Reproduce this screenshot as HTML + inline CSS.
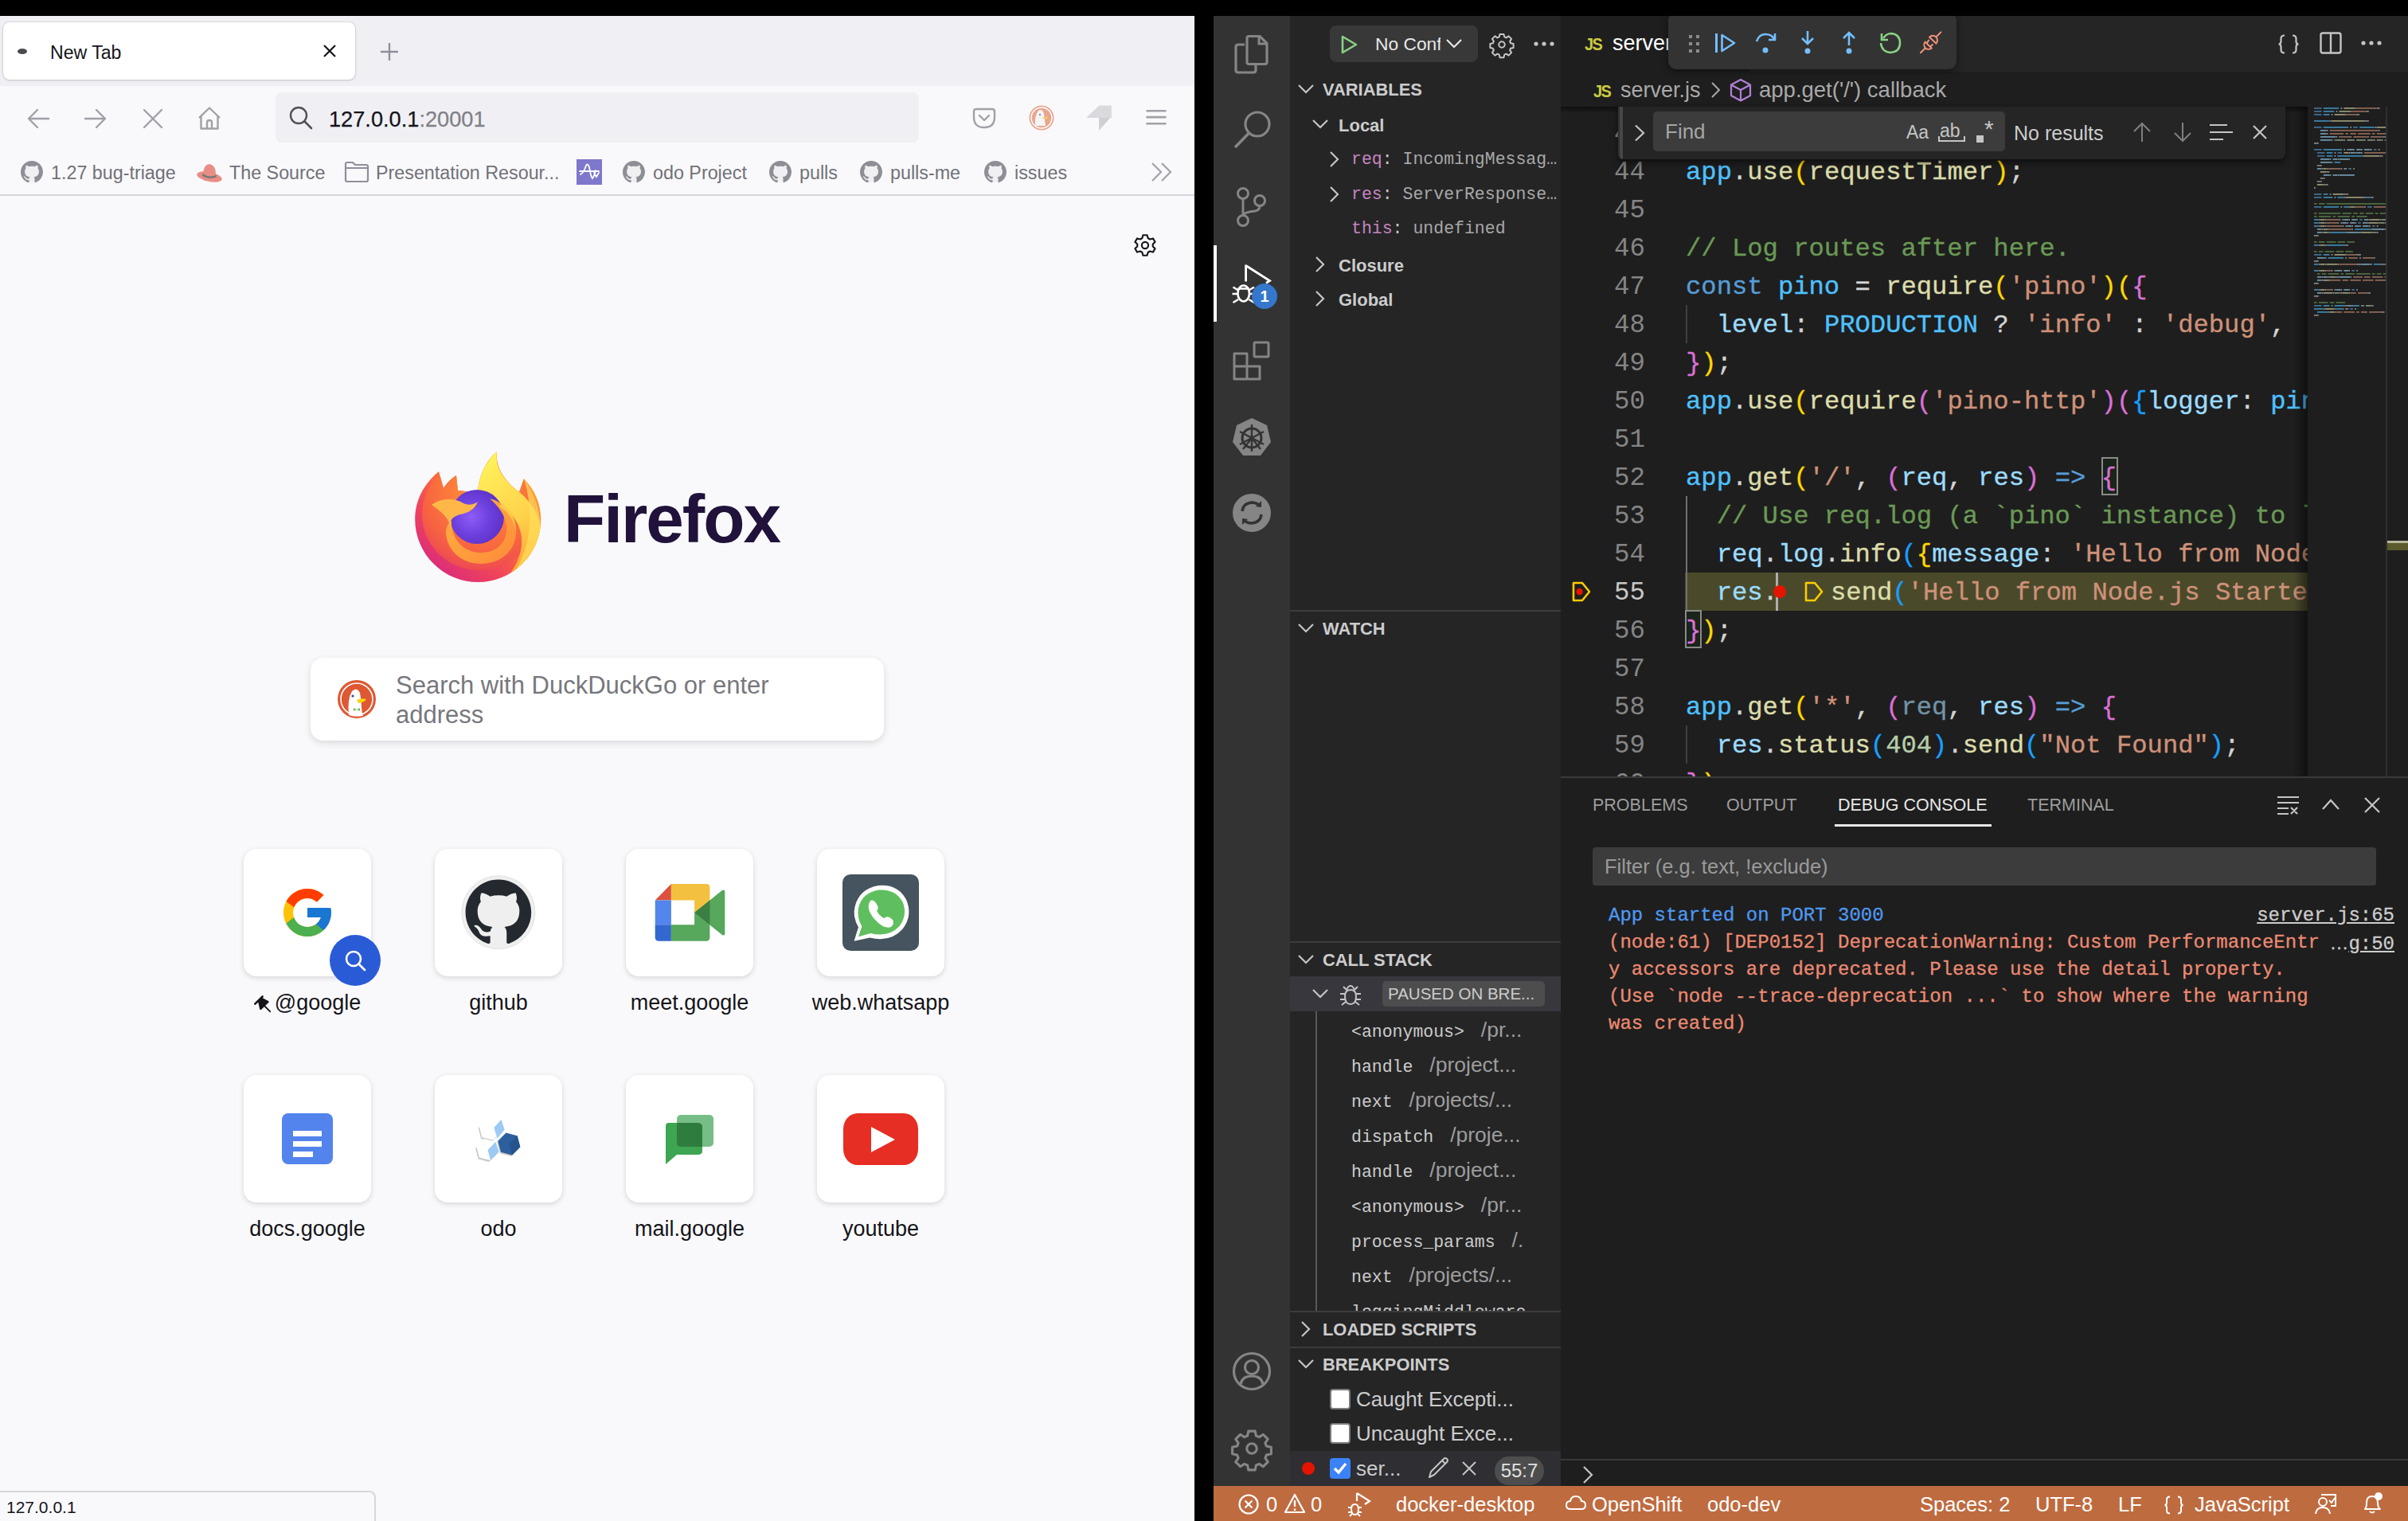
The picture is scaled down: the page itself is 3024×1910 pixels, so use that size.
<!DOCTYPE html>
<html><head><meta charset="utf-8">
<style>
*{box-sizing:border-box;margin:0;padding:0}
html,body{width:3024px;height:1910px;overflow:hidden;background:#000;font-family:"Liberation Sans",sans-serif}
.a{position:absolute}
.mono{font-family:"Liberation Mono",monospace}
svg{position:absolute;overflow:visible}
/* firefox */
#ff{left:0;top:20px;width:1500px;height:1890px;background:#f9f9fb;overflow:hidden}
#fftabs{left:0;top:0;width:1500px;height:88px;background:#f0f0f4}
.ffbm{font-size:23.3px;color:#717179;white-space:nowrap;line-height:30px}
.tile{width:160px;height:160px;background:#fff;border-radius:16px;box-shadow:0 2px 6px rgba(58,57,68,.18)}
.tlabel{width:240px;text-align:center;font-size:27px;color:#15141a;line-height:34px}
/* vscode */
#vs{left:1524px;top:20px;width:1500px;height:1890px;background:#1e1e1e;overflow:hidden}
.sb{color:#cccccc;white-space:nowrap}
.hdr{font-weight:bold;font-size:21.9px;color:#cccccc;line-height:30px}
.code{font-family:"Liberation Mono",monospace;font-size:32.2px;line-height:48px;white-space:pre;color:#d4d4d4;-webkit-text-stroke:0.35px currentColor}
.ln{font-family:"Liberation Mono",monospace;font-size:32.4px;line-height:48px;color:#858585;text-align:right;width:120px}
</style></head><body>
<div class="a" id="ff">
  <div class="a" id="fftabs">
    <div class="a" style="left:4px;top:8px;width:442px;height:72px;background:#fff;border-radius:8px;box-shadow:0 0 2px rgba(0,0,0,.25),0 1px 3px rgba(0,0,0,.12)"></div>
    <div class="a" style="left:22px;top:41px;width:12px;height:7px;border-radius:50%;background:#4a4a4f"></div>
    <div class="a" style="left:63px;top:31px;font-size:23.1px;line-height:30px;color:#15141a">New Tab</div>
    <svg style="left:406px;top:36px" width="16" height="16"><path d="M1 1L15 15M15 1L1 15" stroke="#15141a" stroke-width="2.2"/></svg>
    <svg style="left:477px;top:33px" width="24" height="24"><path d="M12 1V23M1 12H23" stroke="#8f8f9d" stroke-width="2.4"/></svg>
  </div>
  <!-- nav -->
  <svg style="left:34px;top:115px" width="28" height="28"><path d="M27 14H2M13 3L2 14L13 25" stroke="#a0a0a8" stroke-width="2.4" fill="none" stroke-linecap="round" stroke-linejoin="round"/></svg>
  <svg style="left:106px;top:115px" width="28" height="28"><path d="M1 14H26M15 3L26 14L15 25" stroke="#a0a0a8" stroke-width="2.4" fill="none" stroke-linecap="round" stroke-linejoin="round"/></svg>
  <svg style="left:180px;top:117px" width="24" height="24"><path d="M1 1L23 23M23 1L1 23" stroke="#a0a0a8" stroke-width="2.4" stroke-linecap="round"/></svg>
  <svg style="left:248px;top:114px" width="30" height="30"><path d="M2 14L15 1.5L28 14M4.5 12V27.5H25.5V12M12 27.5V20Q12 17 15 17Q18 17 18 20V27.5" stroke="#a0a0a8" stroke-width="2.4" fill="none" stroke-linejoin="round"/></svg>
  <div class="a" style="left:346px;top:96px;width:808px;height:63px;background:#f0f0f4;border-radius:8px"></div>
  <svg style="left:363px;top:113px" width="30" height="30"><circle cx="12" cy="12" r="10" stroke="#505058" stroke-width="2.4" fill="none"/><path d="M19.5 19.5L28 28" stroke="#505058" stroke-width="2.6" stroke-linecap="round"/></svg>
  <div class="a" style="left:413px;top:113px;font-size:27.2px;line-height:34px;color:#15141a;white-space:nowrap;-webkit-text-stroke:0.25px currentColor">127.0.0.1<span style="color:#808087">:20001</span></div>
  <svg style="left:1222px;top:115px" width="28" height="28"><path d="M4 2H24Q27 2 27 5V12Q27 25 14 25Q1 25 1 12V5Q1 2 4 2Z" stroke="#a0a0a8" stroke-width="2.4" fill="none"/><path d="M8 10L14 16L20 10" stroke="#a0a0a8" stroke-width="2.4" fill="none" stroke-linecap="round" stroke-linejoin="round"/></svg>
  <svg style="left:1291px;top:111px" width="34" height="34"><circle cx="17" cy="17" r="15.5" fill="#eaa58d"/><circle cx="17" cy="17" r="13" fill="none" stroke="#fff" stroke-width="1.5"/><path d="M9 27Q8 14 13 8Q18 5 20 12Q21 20 22 27Z" fill="#f4f4f4"/><path d="M17 17L25 15L24 19Z" fill="#f2c66a"/><circle cx="15" cy="13" r="1.2" fill="#7d8cc7"/></svg>
  <svg style="left:1364px;top:111px" width="32" height="34"><path d="M0 17L16.3 1.4H31.8V15.1L16.3 32.5V17Z" fill="#dadade"/><path d="M16.3 17H31.8V15.1L16.3 32.5Z" fill="#cfcfd4"/></svg>
  <svg style="left:1439px;top:116px" width="26" height="24"><path d="M1.5 3.2H24.5M1.5 11.1H24.5M1.5 19.2H24.5" stroke="#a0a0a8" stroke-width="2.6" stroke-linecap="round"/></svg>
  <!-- bookmarks -->
  <svg style="left:26px;top:182px" width="28" height="28"><circle cx="14" cy="14" r="13" fill="#f0f0f2"/><path transform="scale(1.75)" fill="#8e8e96" d="M8 0C3.58 0 0 3.58 0 8c0 3.54 2.29 6.53 5.47 7.59.4.07.55-.17.55-.38 0-.19-.01-.82-.01-1.49-2.01.37-2.53-.49-2.69-.94-.09-.23-.48-.94-.82-1.13-.28-.15-.68-.52-.01-.53.63-.01 1.08.58 1.23.82.72 1.21 1.87.87 2.33.66.07-.52.28-.87.51-1.07-1.78-.2-3.64-.89-3.64-3.95 0-.87.31-1.59.82-2.15-.08-.2-.36-1.02.08-2.12 0 0 .67-.21 2.2.82.64-.18 1.32-.27 2-.27.68 0 1.36.09 2 .27 1.53-1.04 2.2-.82 2.2-.82.44 1.1.16 1.92.08 2.12.51.56.82 1.27.82 2.15 0 3.07-1.87 3.75-3.65 3.95.29.25.54.73.54 1.48 0 1.07-.01 1.93-.01 2.2 0 .21.15.46.55.38A8.013 8.013 0 0016 8c0-4.42-3.58-8-8-8z"/></svg>
  <div class="a ffbm" style="left:64px;top:182px">1.27 bug-triage</div>
  <svg style="left:246px;top:182px" width="34" height="28"><ellipse cx="17" cy="20" rx="16" ry="6" fill="#e88e86" transform="rotate(12 17 20)"/><path d="M9 18Q9 5 17 4Q25 5 25 17Q17 21 9 18Z" fill="#e88e86"/><path d="M8.5 16Q17 22 26 17.5L25.5 20.5Q17 24 8 19Z" fill="#777"/></svg>
  <div class="a ffbm" style="left:288px;top:182px">The Source</div>
  <svg style="left:432px;top:182px" width="32" height="28"><path d="M2 4Q2 2 4 2H11L14 5H28Q30 5 30 7V24Q30 26 28 26H4Q2 26 2 24Z" stroke="#8f8f9d" stroke-width="2.2" fill="none" stroke-linejoin="round"/><path d="M2 9H30" stroke="#8f8f9d" stroke-width="2"/></svg>
  <div class="a ffbm" style="left:472px;top:182px">Presentation Resour...</div>
  <div class="a" style="left:724px;top:180px;width:32px;height:32px;background:#7d78cc"></div>
  <svg style="left:724px;top:180px" width="32" height="32"><path d="M5 19Q9 17 12 8Q14 4 16 10Q18 22 20 24Q22 22 24 14M4 15H28M22 17L25 22L28 17" stroke="#fff" stroke-width="1.8" fill="none" stroke-linecap="round"/></svg>
  <svg style="left:782px;top:182px" width="28" height="28"><circle cx="14" cy="14" r="13" fill="#f0f0f2"/><path transform="scale(1.75)" fill="#8e8e96" d="M8 0C3.58 0 0 3.58 0 8c0 3.54 2.29 6.53 5.47 7.59.4.07.55-.17.55-.38 0-.19-.01-.82-.01-1.49-2.01.37-2.53-.49-2.69-.94-.09-.23-.48-.94-.82-1.13-.28-.15-.68-.52-.01-.53.63-.01 1.08.58 1.23.82.72 1.21 1.87.87 2.33.66.07-.52.28-.87.51-1.07-1.78-.2-3.64-.89-3.64-3.95 0-.87.31-1.59.82-2.15-.08-.2-.36-1.02.08-2.12 0 0 .67-.21 2.2.82.64-.18 1.32-.27 2-.27.68 0 1.36.09 2 .27 1.53-1.04 2.2-.82 2.2-.82.44 1.1.16 1.92.08 2.12.51.56.82 1.27.82 2.15 0 3.07-1.87 3.75-3.65 3.95.29.25.54.73.54 1.48 0 1.07-.01 1.93-.01 2.2 0 .21.15.46.55.38A8.013 8.013 0 0016 8c0-4.42-3.58-8-8-8z"/></svg>
  <div class="a ffbm" style="left:820px;top:182px">odo Project</div>
  <svg style="left:966px;top:182px" width="28" height="28"><circle cx="14" cy="14" r="13" fill="#f0f0f2"/><path transform="scale(1.75)" fill="#8e8e96" d="M8 0C3.58 0 0 3.58 0 8c0 3.54 2.29 6.53 5.47 7.59.4.07.55-.17.55-.38 0-.19-.01-.82-.01-1.49-2.01.37-2.53-.49-2.69-.94-.09-.23-.48-.94-.82-1.13-.28-.15-.68-.52-.01-.53.63-.01 1.08.58 1.23.82.72 1.21 1.87.87 2.33.66.07-.52.28-.87.51-1.07-1.78-.2-3.64-.89-3.64-3.95 0-.87.31-1.59.82-2.15-.08-.2-.36-1.02.08-2.12 0 0 .67-.21 2.2.82.64-.18 1.32-.27 2-.27.68 0 1.36.09 2 .27 1.53-1.04 2.2-.82 2.2-.82.44 1.1.16 1.92.08 2.12.51.56.82 1.27.82 2.15 0 3.07-1.87 3.75-3.65 3.95.29.25.54.73.54 1.48 0 1.07-.01 1.93-.01 2.2 0 .21.15.46.55.38A8.013 8.013 0 0016 8c0-4.42-3.58-8-8-8z"/></svg>
  <div class="a ffbm" style="left:1004px;top:182px">pulls</div>
  <svg style="left:1080px;top:182px" width="28" height="28"><circle cx="14" cy="14" r="13" fill="#f0f0f2"/><path transform="scale(1.75)" fill="#8e8e96" d="M8 0C3.58 0 0 3.58 0 8c0 3.54 2.29 6.53 5.47 7.59.4.07.55-.17.55-.38 0-.19-.01-.82-.01-1.49-2.01.37-2.53-.49-2.69-.94-.09-.23-.48-.94-.82-1.13-.28-.15-.68-.52-.01-.53.63-.01 1.08.58 1.23.82.72 1.21 1.87.87 2.33.66.07-.52.28-.87.51-1.07-1.78-.2-3.64-.89-3.64-3.95 0-.87.31-1.59.82-2.15-.08-.2-.36-1.02.08-2.12 0 0 .67-.21 2.2.82.64-.18 1.32-.27 2-.27.68 0 1.36.09 2 .27 1.53-1.04 2.2-.82 2.2-.82.44 1.1.16 1.92.08 2.12.51.56.82 1.27.82 2.15 0 3.07-1.87 3.75-3.65 3.95.29.25.54.73.54 1.48 0 1.07-.01 1.93-.01 2.2 0 .21.15.46.55.38A8.013 8.013 0 0016 8c0-4.42-3.58-8-8-8z"/></svg>
  <div class="a ffbm" style="left:1118px;top:182px">pulls-me</div>
  <svg style="left:1236px;top:182px" width="28" height="28"><circle cx="14" cy="14" r="13" fill="#f0f0f2"/><path transform="scale(1.75)" fill="#8e8e96" d="M8 0C3.58 0 0 3.58 0 8c0 3.54 2.29 6.53 5.47 7.59.4.07.55-.17.55-.38 0-.19-.01-.82-.01-1.49-2.01.37-2.53-.49-2.69-.94-.09-.23-.48-.94-.82-1.13-.28-.15-.68-.52-.01-.53.63-.01 1.08.58 1.23.82.72 1.21 1.87.87 2.33.66.07-.52.28-.87.51-1.07-1.78-.2-3.64-.89-3.64-3.95 0-.87.31-1.59.82-2.15-.08-.2-.36-1.02.08-2.12 0 0 .67-.21 2.2.82.64-.18 1.32-.27 2-.27.68 0 1.36.09 2 .27 1.53-1.04 2.2-.82 2.2-.82.44 1.1.16 1.92.08 2.12.51.56.82 1.27.82 2.15 0 3.07-1.87 3.75-3.65 3.95.29.25.54.73.54 1.48 0 1.07-.01 1.93-.01 2.2 0 .21.15.46.55.38A8.013 8.013 0 0016 8c0-4.42-3.58-8-8-8z"/></svg>
  <div class="a ffbm" style="left:1274px;top:182px">issues</div>
  <svg style="left:1446px;top:184px" width="26" height="24"><path d="M1 1L12 12L1 23M13 1L24 12L13 23" stroke="#a0a0a8" stroke-width="2.2" fill="none"/></svg>
  <div class="a" style="left:0;top:224px;width:1500px;height:2px;background:#d4d4da"></div>
  <!-- content -->
  <svg style="left:1423px;top:273px" width="30" height="30" viewBox="0 0 16 16"><path d="M6.6 1.2h2.8l.5 2 1.4.8 2-.6 1.4 2.4-1.5 1.4v1.6l1.5 1.4-1.4 2.4-2-.6-1.4.8-.5 2H6.6l-.5-2-1.4-.8-2 .6-1.4-2.4 1.5-1.4V7.2L1.3 5.8l1.4-2.4 2 .6 1.4-.8z" fill="none" stroke="#15141a" stroke-width="1.1" stroke-linejoin="round"/><circle cx="8" cy="8" r="2.2" fill="none" stroke="#15141a" stroke-width="1.1"/></svg>
  <!-- logo -->
  <svg style="left:520px;top:546px" width="164" height="168" viewBox="0 0 164 168">
    <defs>
      <linearGradient id="orb" x1="0.15" y1="0.95" x2="0.85" y2="0.1">
        <stop offset="0" stop-color="#d8287f"/><stop offset="0.3" stop-color="#f0445a"/><stop offset="0.6" stop-color="#ff7139"/><stop offset="1" stop-color="#ffa930"/>
      </linearGradient>
      <radialGradient id="inner" cx="0.5" cy="0.35" r="0.65">
        <stop offset="0" stop-color="#ff9a36"/><stop offset="0.7" stop-color="#f96a3c"/><stop offset="1" stop-color="#ef4d4f"/>
      </radialGradient>
      <radialGradient id="globe" cx="0.4" cy="0.5" r="0.7">
        <stop offset="0" stop-color="#8f5cf7"/><stop offset="0.5" stop-color="#6b3fdc"/><stop offset="1" stop-color="#5a2dbd"/>
      </radialGradient>
      <linearGradient id="flame" x1="0.3" y1="0" x2="0.6" y2="1">
        <stop offset="0" stop-color="#fff35a"/><stop offset="0.6" stop-color="#ffd04a"/><stop offset="1" stop-color="#ff9e30"/>
      </linearGradient>
      <linearGradient id="fox" x1="0" y1="0" x2="1" y2="1">
        <stop offset="0" stop-color="#ffb342"/><stop offset="1" stop-color="#ff8a3a"/>
      </linearGradient>
    </defs>
    <clipPath id="orbclip"><path id="orbp" d="M1.2 86C1.4 62 12 42 31 26L37 47C42 39 47 35 53 31L55 50C63 50 72 52 80 57C80 32 91 12 104 1C102 22 114 38 132 52L138 35C152 50 159 66 159.2 86A79 79 0 0 1 1.2 86Z"/></clipPath>
    <path d="M1.2 86C1.4 62 12 42 31 26L37 47C42 39 47 35 53 31L55 50C63 50 72 52 80 57C80 32 91 12 104 1C102 22 114 38 132 52L138 35C152 50 159 66 159.2 86A79 79 0 0 1 1.2 86Z" fill="url(#orb)"/>
    <g clip-path="url(#orbclip)">
    <ellipse cx="82" cy="80" rx="72" ry="70" fill="url(#inner)" opacity="0.85"/>
    <path d="M80 58C78 32 92 12 104 1C101 22 114 38 130 50C152 68 160 88 159 104C157 132 140 152 114 162C138 136 140 108 128 88C118 70 100 60 80 58Z" fill="url(#flame)"/>
    <path d="M138 35C156 60 161 90 158 110C154 134 140 150 120 160C146 130 152 80 138 35Z" fill="#ffe05a" opacity="0.7"/>
    </g>
    <circle cx="79" cy="83" r="34" fill="url(#globe)"/>
    <path d="M95 60C112 64 128 80 128 102C128 126 108 142 84 142C60 142 42 126 40 104C40 96 43 90 47 88C46 110 62 128 84 128C106 128 118 112 116 94C114 80 106 70 95 60Z" fill="url(#fox)"/>
    <path d="M22 68C32 60 50 58 62 66C70 70 78 66 80 64C76 74 68 78 58 80C50 82 46 86 45 92C42 84 34 76 22 68Z" fill="#ffb848"/>
    <path d="M112 66C122 74 128 88 128 102C126 88 118 76 106 70Z" fill="#ffd24f" opacity="0.8"/>
  </svg>
  <div class="a" style="left:708px;top:582px;font-size:85.5px;font-weight:bold;line-height:100px;color:#20123a;letter-spacing:-2px">Firefox</div>
  <!-- search -->
  <div class="a" style="left:390px;top:806px;width:720px;height:104px;background:#fff;border-radius:16px;box-shadow:0 3px 8px rgba(58,57,68,.16)"></div>
  <svg style="left:424px;top:834px" width="48" height="48"><circle cx="24" cy="24" r="24" fill="#de5833"/><circle cx="24" cy="24" r="20" fill="none" stroke="#fff" stroke-width="1.6"/><path d="M14 44Q12 24 18 14Q24 8 28 16Q30 26 30 34Q30 40 32 45Q22 47 14 44Z" fill="#fff"/><circle cx="19" cy="20" r="1.6" fill="#2d4f8e"/><path d="M24 25Q30 22 36 24Q34 28 26 29Z" fill="#fdd20a"/><path d="M20 39L24 37L28 39L28 35L24 37L20 35Z" fill="#67bd4f"/></svg>
  <div class="a" style="left:497px;top:822px;width:560px;font-size:31px;line-height:37px;color:#77777d">Search with DuckDuckGo or enter address</div>
  <!-- tiles row 1 -->
  <div class="a tile" style="left:306px;top:1046px"></div>
  <div class="a tile" style="left:546px;top:1046px"></div>
  <div class="a tile" style="left:786px;top:1046px"></div>
  <div class="a tile" style="left:1026px;top:1046px"></div>
  <svg style="left:350px;top:1090px" width="72" height="72" viewBox="0 0 48 48"><path d="M43.6 20.1H42V20H24v8h11.3C33.7 32.7 29.2 36 24 36c-6.6 0-12-5.4-12-12s5.4-12 12-12c3.1 0 5.8 1.2 7.9 3.1l5.7-5.7C34 6.1 29.3 4 24 4 13 4 4 13 4 24s9 20 20 20 20-9 20-20c0-1.3-.1-2.6-.4-3.9z" fill="#FFC107"/><path d="M6.3 14.7l6.6 4.8C14.7 15.1 19 12 24 12c3.1 0 5.8 1.2 7.9 3.1l5.7-5.7C34 6.1 29.3 4 24 4 16.3 4 9.7 8.3 6.3 14.7z" fill="#FF3D00"/><path d="M24 44c5.2 0 9.9-2 13.4-5.2l-6.2-5.2C29.2 35.1 26.7 36 24 36c-5.2 0-9.6-3.3-11.3-8l-6.5 5C9.5 39.6 16.2 44 24 44z" fill="#4CAF50"/><path d="M43.6 20.1H42V20H24v8h11.3c-.8 2.2-2.2 4.2-4.1 5.6l6.2 5.2C37 39.2 44 34 44 24c0-1.3-.1-2.6-.4-3.9z" fill="#1976D2"/></svg>
  <div class="a" style="left:414px;top:1154px;width:64px;height:64px;border-radius:50%;background:#2a5bd7"></div>
  <svg style="left:432px;top:1172px" width="30" height="30"><circle cx="12" cy="12" r="9" fill="none" stroke="#fff" stroke-width="2.6"/><path d="M18.5 18.5L26 26" stroke="#fff" stroke-width="2.8" stroke-linecap="round"/></svg>
  <svg style="left:579px;top:1080px" width="94" height="94" viewBox="0 0 94 94"><circle cx="46.9" cy="45.7" r="46" fill="#efefef" stroke="#e2e2e2" stroke-width="1"/><g transform="translate(5.6 4.4) scale(5.1625)"><path fill="#24292f" d="M8 0C3.58 0 0 3.58 0 8c0 3.54 2.29 6.53 5.47 7.59.4.07.55-.17.55-.38 0-.19-.01-.82-.01-1.49-2.01.37-2.53-.49-2.69-.94-.09-.23-.48-.94-.82-1.130-.28-.15-.68-.52-.01-.53.63-.01 1.08.58 1.23.82.72 1.21 1.87.87 2.33.66.07-.52.28-.87.51-1.07-1.780-.2-3.640-.89-3.640-3.950 0-.87.31-1.59.82-2.15-.08-.2-.36-1.02.08-2.12 0 0 .67-.21 2.2.82.64-.18 1.32-.27 2-.27.68 0 1.36.09 2 .27 1.53-1.04 2.2-.82 2.2-.82.44 1.1.16 1.92.08 2.12.51.56.82 1.27.82 2.15 0 3.07-1.87 3.75-3.65 3.95.29.25.54.73.54 1.48 0 1.07-.01 1.93-.01 2.2 0 .21.15.46.55.38A8.013 8.013 0 0016 8c0-4.42-3.58-8-8-8z"/></g></svg>
  <svg style="left:822px;top:1090px" width="92" height="74" viewBox="0 0 92 74"><path d="M0.7 20.5L20.9 0V20.5Z" fill="#dc5141"/><path d="M20.9 0H65Q69.4 0 69.4 4.5V20.5L50.1 36V20.5H20.9Z" fill="#f4c03f"/><path d="M0.7 20.5H20.9V51.3H0.7Z" fill="#5386ec"/><path d="M0.7 51.3H20.9V71.8H5.5Q0.7 71.8 0.7 67Z" fill="#3467d0"/><path d="M20.9 51.3H50.1V36L69.4 52V67Q69.4 71.8 64.6 71.8H20.9Z" fill="#57a75c"/><path d="M50.1 36L84.6 8.3Q88.3 6 88.3 10V62Q88.3 66 84.6 63.7L50.1 36Z" fill="#57a75c"/><path d="M50.1 36L69.4 20.5V52Z" fill="#3b7f43"/></svg>
  <div class="a" style="left:1058px;top:1078px;width:96px;height:96px;border-radius:10px;background:#45545e"></div>
  <svg style="left:1066px;top:1086px" width="80" height="80" viewBox="0 0 80 80"><g transform="translate(40.9 39.5) scale(1.09) translate(-39.5 -38.7)"><path d="M8 72L13 56Q6 44 9 32Q14 12 36 8Q58 6 68 24Q76 42 64 58Q50 74 26 68Z" fill="#fff"/><path d="M13 67L17 55Q11 45 13 34Q17 16 37 13Q56 12 64 27Q70 42 60 55Q48 68 27 63Z" fill="#5fbf5e"/><path d="M28 26Q24 30 27 38Q32 48 42 54Q50 57 52 52Q53 48 49 46Q45 44 43 47Q36 44 33 37Q36 34 33 30Q31 26 28 26Z" fill="#fff" stroke="#fff" stroke-width="2.2" stroke-linejoin="round"/></g></svg>
  <div class="a tlabel" style="left:266px;top:1222px;color:#15141a"><span style="display:inline-block;width:26px"></span>@google</div>
  <svg style="left:317px;top:1228px" width="26" height="26"><path d="M3.3 12.6L12.6 3.5" stroke="#15141a" stroke-width="2.6" stroke-linecap="round"/><path d="M7 9.5L12 4.8L20.4 9.2Q21.2 10 20.4 10.8L11.2 19.8Q9.8 20.6 9.2 19.2Z" fill="#15141a"/><path d="M15.5 15.5L22.3 22.3" stroke="#15141a" stroke-width="1.8" stroke-linecap="round"/></svg>
  <div class="a tlabel" style="left:506px;top:1222px">github</div>
  <div class="a tlabel" style="left:746px;top:1222px">meet.google</div>
  <div class="a tlabel" style="left:986px;top:1222px">web.whatsapp</div>
  <!-- tiles row 2 -->
  <div class="a tile" style="left:306px;top:1330px"></div>
  <div class="a tile" style="left:546px;top:1330px"></div>
  <div class="a tile" style="left:786px;top:1330px"></div>
  <div class="a tile" style="left:1026px;top:1330px"></div>
  <div class="a" style="left:354px;top:1378px;width:64px;height:64px;border-radius:8px;background:#5383ec"></div>
  <div class="a" style="left:368px;top:1400px;width:36px;height:7px;background:#fff"></div>
  <div class="a" style="left:368px;top:1413px;width:36px;height:7px;background:#fff"></div>
  <div class="a" style="left:368px;top:1426px;width:25px;height:7px;background:#fff"></div>
  <svg style="left:596px;top:1380px" width="64" height="64" viewBox="0 0 64 64"><polygon points="32.8,21.6 22.9,31.5 9.4,27.9 5.8,14.4 15.7,4.5 29.2,8.1" fill="#9a9a9a" opacity="0.5" transform="translate(-1.2 2)"/><polygon points="32.8,21.6 22.9,31.5 9.4,27.9 5.8,14.4 15.7,4.5 29.2,8.1" fill="#ffffff"/><polygon points="29.3,47.2 19.4,57.1 5.9,53.5 2.3,40.0 12.2,30.1 25.7,33.7" fill="#9a9a9a" opacity="0.55" transform="translate(-1.2 2)"/><polygon points="29.3,47.2 19.4,57.1 5.9,53.5 2.3,40.0 12.2,30.1 25.7,33.7" fill="#ffffff"/><polygon points="24.3,16 33.4,6.1 37.7,18.8 28.5,29.4" fill="#9dcaf5"/><polygon points="16.5,44.3 26.4,33.7 30.6,46.4 20,57" fill="#9dcaf5"/><polygon points="57.3,40.3 47.1,50.5 33.0,46.8 29.3,32.7 39.5,22.5 53.6,26.2" fill="#888" opacity="0.5" transform="translate(-1 1.5)"/><polygon points="57.3,40.3 47.1,50.5 33.0,46.8 29.3,32.7 39.5,22.5 53.6,26.2" fill="#2c5f9e"/><polygon points="43.3,36.5 53.6,26.2 57.3,40.3 47.1,50.5" fill="#25548c"/></svg>
  <svg style="left:836px;top:1380px" width="60" height="62" viewBox="0 0 60 62"><rect x="14" y="0" width="46" height="40" rx="5" fill="#5fb273" opacity="0.85"/><path d="M0 14Q0 10 4 10H40Q46 10 46 16V46Q46 50 40 50H14L0 62Z" fill="#3ea552"/><path d="M14 10H40Q46 10 46 16V40H19Q14 40 14 35Z" fill="#2f7d3e"/></svg>
  <div class="a" style="left:1059px;top:1378px;width:94px;height:65px;border-radius:18px/20px;background:#e62e24"></div>
  <svg style="left:1094px;top:1395px" width="30" height="32"><path d="M0 0L30 16L0 32Z" fill="#fff"/></svg>
  <div class="a tlabel" style="left:266px;top:1506px">docs.google</div>
  <div class="a tlabel" style="left:506px;top:1506px">odo</div>
  <div class="a tlabel" style="left:746px;top:1506px">mail.google</div>
  <div class="a tlabel" style="left:986px;top:1506px">youtube</div>
  <!-- status -->
  <div class="a" style="left:-2px;top:1852px;width:474px;height:50px;background:#f9f9fb;border:2px solid #d6d6dc;border-radius:0 8px 0 0"></div>
  <div class="a" style="left:8px;top:1858px;font-size:21px;line-height:30px;color:#15141a">127.0.0.1</div>
</div>
<div class="a" id="vs">
<div class="a" style="left:0;top:0;width:96px;height:1846px;background:#333333"></div>
<svg style="left:26px;top:24px" width="44" height="48" viewBox="0 0 44 48"><path d="M13 12H5Q2 12 2 15V44Q2 47 5 47H24Q27 47 27 44V37" stroke="#858585" stroke-width="3.2" fill="none"/><path d="M16 4Q16 1.5 18.5 1.5H32L41 10.5V34Q41 36.5 38.5 36.5H18.5Q16 36.5 16 34Z" stroke="#858585" stroke-width="3.2" fill="none" stroke-linejoin="round"/><path d="M31 2V11H41" stroke="#858585" stroke-width="3" fill="none"/></svg>
<svg style="left:24px;top:118px" width="50" height="52"><circle cx="31" cy="18" r="15" stroke="#858585" stroke-width="3.2" fill="none"/><path d="M20.5 29L3 47" stroke="#858585" stroke-width="3.6"/></svg>
<svg style="left:28px;top:214px" width="40" height="54"><circle cx="9" cy="9" r="6.5" stroke="#858585" stroke-width="3" fill="none"/><circle cx="30" cy="18" r="6.5" stroke="#858585" stroke-width="3" fill="none"/><circle cx="9" cy="43" r="6.5" stroke="#858585" stroke-width="3" fill="none"/><path d="M9 15.5V36.5M30 24.5Q30 30 24 31Q12 32 9 36" stroke="#858585" stroke-width="3" fill="none"/></svg>
<div class="a" style="left:0;top:288px;width:4px;height:96px;background:#fff"></div>
<svg style="left:22px;top:310px" width="56" height="56"><path d="M18.6 2.5V23.5M18.6 3.5L48.5 22.5L44 25.5" stroke="#fff" stroke-width="2.8" fill="none"/><ellipse cx="15.7" cy="38.5" rx="7.3" ry="10" stroke="#fff" stroke-width="2.7" fill="none"/><path d="M8.5 32.5H23M1.5 39H8.5M23 39H28M2.5 30.5L9 34.5M2.5 50L9 46M29 30.5L22.5 34.5M29 50L22.5 46" stroke="#fff" stroke-width="2.6"/></svg>
<div class="a" style="left:48px;top:336px;width:32px;height:32px;border-radius:50%;background:#3577cb;color:#fff;font-size:20px;font-weight:bold;line-height:32px;text-align:center">1</div>
<svg style="left:24px;top:408px" width="50" height="50"><path d="M2 16H18V32H2ZM2 32H18V48H2ZM18 32H34V48H18Z" stroke="#858585" stroke-width="3" fill="none" stroke-linejoin="round"/><rect x="27" y="2" width="18" height="18" rx="1.5" stroke="#858585" stroke-width="3" fill="none"/></svg>
<svg style="left:23px;top:504px" width="50" height="50" viewBox="0 0 50 50"><path d="M25 1L44 10L49 31L36 48H14L1 31L6 10Z" fill="#858585"/><circle cx="25" cy="26" r="12" stroke="#333" stroke-width="3" fill="none"/><circle cx="25" cy="26" r="3" fill="#333"/><path d="M25 9V43M10 18L40 34M10 34L40 18M25 26L14 40M25 26L36 40" stroke="#333" stroke-width="2.4"/></svg>
<svg style="left:23px;top:599px" width="50" height="50" viewBox="0 0 50 50"><circle cx="25" cy="25" r="24" fill="#858585"/><path d="M13 23Q14 13 25 12Q31 12 35 16M37 27Q36 37 25 38Q19 38 15 34" stroke="#333" stroke-width="3.4" fill="none"/><path d="M30 17L37 18L37 10ZM20 33L13 32L13 40Z" fill="#333"/></svg>
<svg style="left:24px;top:1678px" width="48" height="48"><circle cx="24" cy="24" r="22.5" stroke="#858585" stroke-width="3.2" fill="none"/><circle cx="24" cy="19" r="8.5" stroke="#858585" stroke-width="3.2" fill="none"/><path d="M10 40Q12 30 24 30Q36 30 38 40" stroke="#858585" stroke-width="3.2" fill="none"/></svg>
<svg style="left:23px;top:1774px" width="50" height="50" viewBox="0 0 24 24"><path d="M10 1.5h4l.6 2.8 1.9.8 2.4-1.6 2.8 2.8-1.6 2.4.8 1.9 2.8.6v4l-2.8.6-.8 1.9 1.6 2.4-2.8 2.8-2.4-1.6-1.9.8-.6 2.8h-4l-.6-2.8-1.9-.8-2.4 1.6-2.8-2.8 1.6-2.4-.8-1.9-2.8-.6v-4l2.8-.6.8-1.9-1.6-2.4 2.8-2.8 2.4 1.6 1.9-.8z" stroke="#858585" stroke-width="1.5" fill="none" stroke-linejoin="round"/><circle cx="12" cy="12" r="3" stroke="#858585" stroke-width="1.5" fill="none"/></svg>
<div class="a" style="left:96px;top:0;width:340px;height:1846px;background:#252526"></div>
<div class="a" style="left:146px;top:12px;width:186px;height:46px;border-radius:8px;background:#383838"></div>
<svg style="left:160px;top:24px" width="22" height="24"><path d="M2 2L19 12L2 22Z" stroke="#89d185" stroke-width="2.6" fill="none" stroke-linejoin="round"/></svg>
<div class="a sb" style="left:203px;top:20px;font-size:22.8px;line-height:30px;color:#e7e7e7">No Conf</div>
<div class="a" style="left:285px;top:12px;width:20px;height:46px;background:#383838"></div>
<svg style="left:292px;top:29px" width="20" height="12"><path d="M1 1L10 10L19 1" stroke="#e7e7e7" stroke-width="2.2" fill="none"/></svg>
<svg style="left:347px;top:21px" width="30" height="30" viewBox="0 0 24 24"><path d="M10 1.5h4l.6 2.8 1.9.8 2.4-1.6 2.8 2.8-1.6 2.4.8 1.9 2.8.6v4l-2.8.6-.8 1.9 1.6 2.4-2.8 2.8-2.4-1.6-1.9.8-.6 2.8h-4l-.6-2.8-1.9-.8-2.4 1.6-2.8-2.8 1.6-2.4-.8-1.9-2.8-.6v-4l2.8-.6.8-1.9-1.6-2.4 2.8-2.8 2.4 1.6 1.9-.8z" stroke="#c5c5c5" stroke-width="1.6" fill="none" stroke-linejoin="round"/><circle cx="12" cy="12" r="3" stroke="#c5c5c5" stroke-width="1.6" fill="none"/></svg>
<svg style="left:402px;top:32px" width="26" height="6"><circle cx="3" cy="3" r="2.6" fill="#c5c5c5"/><circle cx="13" cy="3" r="2.6" fill="#c5c5c5"/><circle cx="23" cy="3" r="2.6" fill="#c5c5c5"/></svg>
<svg style="left:106px;top:86px" width="20" height="12"><path d="M1 1L10 10L19 1" stroke="#c5c5c5" stroke-width="2.2" fill="none"/></svg>
<div class="a hdr" style="left:137px;top:78px">VARIABLES</div>
<svg style="left:124px;top:130px" width="20" height="12"><path d="M1 1L10 10L19 1" stroke="#c5c5c5" stroke-width="2.2" fill="none"/></svg>
<div class="a sb" style="left:157px;top:123px;font-size:22px;font-weight:bold;line-height:30px">Local</div>
<svg style="left:146px;top:170px" width="12" height="20"><path d="M1 1L10 10 L1 19" stroke="#c5c5c5" stroke-width="2.2" fill="none"/></svg>
<div class="a sb mono" style="left:173px;top:165px;font-size:21.5px;line-height:30px"><span style="color:#c586c0">req</span>: <span style="color:#a8a8a8">IncomingMessag…</span></div>
<svg style="left:146px;top:214px" width="12" height="20"><path d="M1 1L10 10 L1 19" stroke="#c5c5c5" stroke-width="2.2" fill="none"/></svg>
<div class="a sb mono" style="left:173px;top:209px;font-size:21.5px;line-height:30px"><span style="color:#c586c0">res</span>: <span style="color:#a8a8a8">ServerResponse…</span></div>
<div class="a sb mono" style="left:173px;top:252px;font-size:21.5px;line-height:30px"><span style="color:#c586c0">this</span>: <span style="color:#a8a8a8">undefined</span></div>
<svg style="left:128px;top:302px" width="12" height="20"><path d="M1 1L10 10 L1 19" stroke="#c5c5c5" stroke-width="2.2" fill="none"/></svg>
<div class="a sb" style="left:157px;top:299px;font-size:22px;font-weight:bold;line-height:30px">Closure</div>
<svg style="left:128px;top:345px" width="12" height="20"><path d="M1 1L10 10 L1 19" stroke="#c5c5c5" stroke-width="2.2" fill="none"/></svg>
<div class="a sb" style="left:157px;top:342px;font-size:22px;font-weight:bold;line-height:30px">Global</div>
<div class="a" style="left:96px;top:746px;width:340px;height:2px;background:#3c3c3c"></div>
<svg style="left:106px;top:763px" width="20" height="12"><path d="M1 1L10 10L19 1" stroke="#c5c5c5" stroke-width="2.2" fill="none"/></svg>
<div class="a hdr" style="left:137px;top:755px">WATCH</div>
<div class="a" style="left:96px;top:1162px;width:340px;height:2px;background:#3c3c3c"></div>
<svg style="left:106px;top:1179px" width="20" height="12"><path d="M1 1L10 10L19 1" stroke="#c5c5c5" stroke-width="2.2" fill="none"/></svg>
<div class="a hdr" style="left:137px;top:1171px">CALL STACK</div>
<div class="a" style="left:96px;top:1206px;width:340px;height:44px;background:#37373d"></div>
<svg style="left:124px;top:1222px" width="20" height="12"><path d="M1 1L10 10L19 1" stroke="#c5c5c5" stroke-width="2.2" fill="none"/></svg>
<svg style="left:157px;top:1214px" width="30" height="30"><path d="M8 17Q8 9 15 9Q22 9 22 17Q22 27 15 27Q8 27 8 17Z" stroke="#c5c5c5" stroke-width="2" fill="none"/><path d="M10 9Q12 4 15 4Q18 4 20 9M2 14H8M22 14H28M2 21H8M22 21H28M4 28L9 24M26 28L21 24M6 5L10 9M24 5L20 9" stroke="#c5c5c5" stroke-width="2" fill="none"/></svg>
<div class="a" style="left:212px;top:1212px;width:204px;height:32px;border-radius:5px;background:#4d4d4d"></div>
<div class="a sb" style="left:219px;top:1213px;font-size:20.5px;line-height:30px;color:#cccccc">PAUSED ON BRE...</div>
<div class="a" style="left:128px;top:1250px;width:2px;height:376px;background:#585858"></div>
<div class="a sb mono" style="left:173px;top:1258px;font-size:21.5px;line-height:30px;color:#cccccc">&lt;anonymous&gt; <span style="font-family:'Liberation Sans',sans-serif;color:#9d9d9d;font-size:26.5px;margin-left:8px;-webkit-text-stroke:0">/pr...</span></div>
<div class="a sb mono" style="left:173px;top:1302px;font-size:21.5px;line-height:30px;color:#cccccc">handle <span style="font-family:'Liberation Sans',sans-serif;color:#9d9d9d;font-size:26.5px;margin-left:8px;-webkit-text-stroke:0">/project...</span></div>
<div class="a sb mono" style="left:173px;top:1346px;font-size:21.5px;line-height:30px;color:#cccccc">next <span style="font-family:'Liberation Sans',sans-serif;color:#9d9d9d;font-size:26.5px;margin-left:8px;-webkit-text-stroke:0">/projects/...</span></div>
<div class="a sb mono" style="left:173px;top:1390px;font-size:21.5px;line-height:30px;color:#cccccc">dispatch <span style="font-family:'Liberation Sans',sans-serif;color:#9d9d9d;font-size:26.5px;margin-left:8px;-webkit-text-stroke:0">/proje...</span></div>
<div class="a sb mono" style="left:173px;top:1434px;font-size:21.5px;line-height:30px;color:#cccccc">handle <span style="font-family:'Liberation Sans',sans-serif;color:#9d9d9d;font-size:26.5px;margin-left:8px;-webkit-text-stroke:0">/project...</span></div>
<div class="a sb mono" style="left:173px;top:1478px;font-size:21.5px;line-height:30px;color:#cccccc">&lt;anonymous&gt; <span style="font-family:'Liberation Sans',sans-serif;color:#9d9d9d;font-size:26.5px;margin-left:8px;-webkit-text-stroke:0">/pr...</span></div>
<div class="a sb mono" style="left:173px;top:1522px;font-size:21.5px;line-height:30px;color:#cccccc">process_params <span style="font-family:'Liberation Sans',sans-serif;color:#9d9d9d;font-size:26.5px;margin-left:8px;-webkit-text-stroke:0">/.</span></div>
<div class="a sb mono" style="left:173px;top:1566px;font-size:21.5px;line-height:30px;color:#cccccc">next <span style="font-family:'Liberation Sans',sans-serif;color:#9d9d9d;font-size:26.5px;margin-left:8px;-webkit-text-stroke:0">/projects/...</span></div>
<div class="a sb mono" style="left:173px;top:1610px;font-size:21.5px;line-height:30px;color:#cccccc">loggingMiddleware <span style="font-family:'Liberation Sans',sans-serif;color:#9d9d9d;font-size:26.5px;margin-left:8px;-webkit-text-stroke:0"></span></div>
<div class="a" style="left:96px;top:1626px;width:340px;height:220px;background:#252526"></div>
<div class="a" style="left:96px;top:1626px;width:340px;height:2px;background:#3c3c3c"></div>
<svg style="left:110px;top:1639px" width="12" height="20"><path d="M1 1L10 10 L1 19" stroke="#c5c5c5" stroke-width="2.2" fill="none"/></svg>
<div class="a hdr" style="left:137px;top:1635px">LOADED SCRIPTS</div>
<div class="a" style="left:96px;top:1671px;width:340px;height:2px;background:#3c3c3c"></div>
<svg style="left:106px;top:1687px" width="20" height="12"><path d="M1 1L10 10L19 1" stroke="#c5c5c5" stroke-width="2.2" fill="none"/></svg>
<div class="a hdr" style="left:137px;top:1679px">BREAKPOINTS</div>
<div class="a" style="left:146px;top:1724px;width:26px;height:26px;border-radius:4px;background:#fff;border:2px solid #7a7a7a"></div>
<div class="a sb" style="left:179px;top:1721px;font-size:26px;line-height:32px">Caught Excepti...</div>
<div class="a" style="left:146px;top:1767px;width:26px;height:26px;border-radius:4px;background:#fff;border:2px solid #7a7a7a"></div>
<div class="a sb" style="left:179px;top:1764px;font-size:26px;line-height:32px">Uncaught Exce...</div>
<div class="a" style="left:96px;top:1802px;width:340px;height:44px;background:#2e2e33"></div>
<div class="a" style="left:111px;top:1816px;width:16px;height:16px;border-radius:50%;background:#e51400"></div>
<div class="a" style="left:146px;top:1811px;width:26px;height:26px;border-radius:4px;background:#3b82f6"></div>
<svg style="left:146px;top:1811px" width="26" height="26"><path d="M6 13L11 18L20 7" stroke="#fff" stroke-width="3.4" fill="none"/></svg>
<div class="a sb" style="left:179px;top:1808px;font-size:26px;line-height:32px">ser...</div>
<svg style="left:267px;top:1808px" width="30" height="30"><path d="M4 27L6 20L22 4Q24 2 26 4Q28 6 26 8L10 24Z M20 6L24 10" stroke="#c5c5c5" stroke-width="2" fill="none" stroke-linejoin="round"/></svg>
<svg style="left:312px;top:1815px" width="18" height="18"><path d="M1 1L17 17M17 1L1 17" stroke="#c5c5c5" stroke-width="2"/></svg>
<div class="a" style="left:353px;top:1809px;width:62px;height:36px;border-radius:18px;background:#4d4d4d"></div>
<div class="a sb" style="left:353px;top:1811px;width:62px;text-align:center;font-size:24px;line-height:32px;color:#e0e0e0">55:7</div>
<div class="a" style="left:436px;top:0;width:1064px;height:70px;background:#252526"></div>
<div class="a" style="left:436px;top:0;width:238px;height:70px;background:#1e1e1e"></div>
<div class="a" style="left:466px;top:20px;font-size:20px;font-weight:bold;line-height:30px;color:#cbcb41;letter-spacing:-1.5px;transform:scaleY(1.1)">JS</div>
<div class="a" style="left:501px;top:17px;font-size:27px;line-height:34px;color:#ffffff">server.js</div>
<svg style="left:1337px;top:23px" width="26" height="26"><path d="M8 1.5Q3.5 1.5 3.5 5.5V9Q3.5 12.5 0.5 12.5Q3.5 12.5 3.5 16V19.5Q3.5 23.5 8 23.5M18 1.5Q22.5 1.5 22.5 5.5V9Q22.5 12.5 25.5 12.5Q22.5 12.5 22.5 16V19.5Q22.5 23.5 18 23.5" stroke="#c5c5c5" stroke-width="2.2" fill="none"/></svg>
<svg style="left:1389px;top:20px" width="28" height="28"><rect x="1.5" y="1.5" width="25" height="25" rx="2.5" stroke="#c5c5c5" stroke-width="2.4" fill="none"/><path d="M14 2V26" stroke="#c5c5c5" stroke-width="2.4"/></svg>
<svg style="left:1441px;top:31px" width="26" height="6"><circle cx="3" cy="3" r="2.6" fill="#c5c5c5"/><circle cx="13" cy="3" r="2.6" fill="#c5c5c5"/><circle cx="23" cy="3" r="2.6" fill="#c5c5c5"/></svg>
<div class="a" style="left:436px;top:70px;width:1064px;height:44px;background:#1e1e1e"></div>
<div class="a" style="left:477px;top:79px;font-size:20px;font-weight:bold;line-height:30px;color:#cbcb41;letter-spacing:-1.5px;transform:scaleY(1.1)">JS</div>
<div class="a" style="left:511px;top:76px;font-size:27px;line-height:34px;color:#a9a9a9">server.js</div>
<svg style="left:625px;top:83px" width="12" height="20"><path d="M1 1L10 10L1 19" stroke="#a9a9a9" stroke-width="2" fill="none"/></svg>
<svg style="left:648px;top:78px" width="28" height="30" viewBox="0 0 28 30"><path d="M14 2L26 8.5V22L14 28.5L2 22V8.5Z M2 8.5L14 15L26 8.5M14 15V28.5" stroke="#b180d7" stroke-width="2.2" fill="none" stroke-linejoin="round"/></svg>
<div class="a" style="left:685px;top:76px;font-size:27.5px;line-height:34px;color:#a9a9a9;white-space:nowrap">app.get('/') callback</div>
<div class="a" style="left:436px;top:114px;width:938px;height:841px;overflow:hidden;background:#1e1e1e">
<div class="a" style="left:156px;top:585px;width:782px;height:48px;background:#4b4b18;opacity:0.85"></div>
<div class="a" style="left:156px;top:585px;width:782px;height:48px;background:#4a4a2b"></div>
<div class="a" style="left:157px;top:249px;width:2px;height:48px;background:#404040"></div>
<div class="a" style="left:157px;top:489px;width:2px;height:144px;background:#707070"></div>
<div class="a" style="left:157px;top:777px;width:2px;height:48px;background:#404040"></div>
<div class="a" style="left:679px;top:440px;width:21px;height:48px;border:2px solid #8a8a8a;background:rgba(0,100,0,.1)"></div>
<div class="a" style="left:156px;top:632px;width:21px;height:48px;border:2px solid #8a8a8a;background:rgba(0,100,0,.1)"></div>
<div class="a code" style="left:157px;top:11px"><span style="color:#6a9955">// Time routes after here.</span></div>
<div class="a code" style="left:157px;top:59px"><span style="color:#4fc1ff">app</span><span style="color:#d4d4d4">.</span><span style="color:#dcdcaa">use</span><span style="color:#ffd700">(</span><span style="color:#dcdcaa">requestTimer</span><span style="color:#ffd700">)</span><span style="color:#d4d4d4">;</span></div>
<div class="a code" style="left:157px;top:107px"></div>
<div class="a code" style="left:157px;top:155px"><span style="color:#6a9955">// Log routes after here.</span></div>
<div class="a code" style="left:157px;top:203px"><span style="color:#569cd6">const</span><span style="color:#d4d4d4"> </span><span style="color:#4fc1ff">pino</span><span style="color:#d4d4d4"> = </span><span style="color:#dcdcaa">require</span><span style="color:#ffd700">(</span><span style="color:#ce9178">&#x27;pino&#x27;</span><span style="color:#ffd700">)</span><span style="color:#ffd700">(</span><span style="color:#da70d6">{</span></div>
<div class="a code" style="left:157px;top:251px"><span style="color:#d4d4d4">  </span><span style="color:#9cdcfe">level</span><span style="color:#d4d4d4">: </span><span style="color:#4fc1ff">PRODUCTION</span><span style="color:#d4d4d4"> ? </span><span style="color:#ce9178">&#x27;info&#x27;</span><span style="color:#d4d4d4"> : </span><span style="color:#ce9178">&#x27;debug&#x27;</span><span style="color:#d4d4d4">,</span></div>
<div class="a code" style="left:157px;top:299px"><span style="color:#da70d6">}</span><span style="color:#ffd700">)</span><span style="color:#d4d4d4">;</span></div>
<div class="a code" style="left:157px;top:347px"><span style="color:#4fc1ff">app</span><span style="color:#d4d4d4">.</span><span style="color:#dcdcaa">use</span><span style="color:#ffd700">(</span><span style="color:#dcdcaa">require</span><span style="color:#da70d6">(</span><span style="color:#ce9178">&#x27;pino-http&#x27;</span><span style="color:#da70d6">)</span><span style="color:#da70d6">(</span><span style="color:#179fff">{</span><span style="color:#9cdcfe">logger</span><span style="color:#d4d4d4">: </span><span style="color:#4fc1ff">pino</span><span style="color:#179fff">}</span><span style="color:#da70d6">)</span><span style="color:#ffd700">)</span><span style="color:#d4d4d4">;</span></div>
<div class="a code" style="left:157px;top:395px"></div>
<div class="a code" style="left:157px;top:443px"><span style="color:#4fc1ff">app</span><span style="color:#d4d4d4">.</span><span style="color:#dcdcaa">get</span><span style="color:#ffd700">(</span><span style="color:#ce9178">&#x27;/&#x27;</span><span style="color:#d4d4d4">, </span><span style="color:#da70d6">(</span><span style="color:#9cdcfe">req</span><span style="color:#d4d4d4">, </span><span style="color:#9cdcfe">res</span><span style="color:#da70d6">)</span><span style="color:#d4d4d4"> </span><span style="color:#569cd6">=&gt;</span><span style="color:#d4d4d4"> </span><span style="color:#da70d6">{</span></div>
<div class="a code" style="left:157px;top:491px"><span style="color:#d4d4d4">  </span><span style="color:#6a9955">// Use req.log (a `pino` instance) to log JSON:</span></div>
<div class="a code" style="left:157px;top:539px"><span style="color:#d4d4d4">  </span><span style="color:#9cdcfe">req</span><span style="color:#d4d4d4">.</span><span style="color:#9cdcfe">log</span><span style="color:#d4d4d4">.</span><span style="color:#dcdcaa">info</span><span style="color:#179fff">(</span><span style="color:#ffd700">{</span><span style="color:#9cdcfe">message</span><span style="color:#d4d4d4">: </span><span style="color:#ce9178">&#x27;Hello from Node.js Starter Application!&#x27;</span><span style="color:#ffd700">}</span><span style="color:#179fff">)</span><span style="color:#d4d4d4">;</span></div>
<div class="a code" style="left:157px;top:587px"><span style="color:#d4d4d4">  </span><span style="color:#9cdcfe">res</span><span style="color:#d4d4d4">.</span></div>
<div class="a code" style="left:157px;top:635px"><span style="color:#da70d6">}</span><span style="color:#ffd700">)</span><span style="color:#d4d4d4">;</span></div>
<div class="a code" style="left:157px;top:683px"></div>
<div class="a code" style="left:157px;top:731px"><span style="color:#4fc1ff">app</span><span style="color:#d4d4d4">.</span><span style="color:#dcdcaa">get</span><span style="color:#ffd700">(</span><span style="color:#ce9178">&#x27;*&#x27;</span><span style="color:#d4d4d4">, </span><span style="color:#da70d6">(</span><span style="color:#7193a8">req</span><span style="color:#d4d4d4">, </span><span style="color:#9cdcfe">res</span><span style="color:#da70d6">)</span><span style="color:#d4d4d4"> </span><span style="color:#569cd6">=&gt;</span><span style="color:#d4d4d4"> </span><span style="color:#da70d6">{</span></div>
<div class="a code" style="left:157px;top:779px"><span style="color:#d4d4d4">  </span><span style="color:#9cdcfe">res</span><span style="color:#d4d4d4">.</span><span style="color:#dcdcaa">status</span><span style="color:#179fff">(</span><span style="color:#b5cea8">404</span><span style="color:#179fff">)</span><span style="color:#d4d4d4">.</span><span style="color:#dcdcaa">send</span><span style="color:#179fff">(</span><span style="color:#ce9178">&quot;Not Found&quot;</span><span style="color:#179fff">)</span><span style="color:#d4d4d4">;</span></div>
<div class="a code" style="left:157px;top:827px"><span style="color:#da70d6">}</span><span style="color:#ffd700">)</span><span style="color:#d4d4d4">;</span></div>
<div class="a" style="left:270px;top:585px;width:3px;height:48px;background:#aeafad"></div>
<div class="a" style="left:267px;top:601px;width:16px;height:16px;border-radius:50%;background:#e51400"></div>
<svg style="left:305px;top:595px" width="26" height="28"><path d="M3 3H14L23 14L14 25H3Z" stroke="#ffcc00" stroke-width="2.6" fill="none" stroke-linejoin="round"/></svg>
<div class="a code" style="left:339px;top:587px"><span style="color:#dcdcaa">send</span><span style="color:#179fff">(</span><span style="color:#ce9178">'Hello from Node.js Starter Application!'</span><span style="color:#179fff">)</span>;</div>
<div class="a ln" style="left:-14px;top:11px;color:#858585">43</div>
<div class="a ln" style="left:-14px;top:59px;color:#858585">44</div>
<div class="a ln" style="left:-14px;top:107px;color:#858585">45</div>
<div class="a ln" style="left:-14px;top:155px;color:#858585">46</div>
<div class="a ln" style="left:-14px;top:203px;color:#858585">47</div>
<div class="a ln" style="left:-14px;top:251px;color:#858585">48</div>
<div class="a ln" style="left:-14px;top:299px;color:#858585">49</div>
<div class="a ln" style="left:-14px;top:347px;color:#858585">50</div>
<div class="a ln" style="left:-14px;top:395px;color:#858585">51</div>
<div class="a ln" style="left:-14px;top:443px;color:#858585">52</div>
<div class="a ln" style="left:-14px;top:491px;color:#858585">53</div>
<div class="a ln" style="left:-14px;top:539px;color:#858585">54</div>
<div class="a ln" style="left:-14px;top:587px;color:#c6c6c6">55</div>
<div class="a ln" style="left:-14px;top:635px;color:#858585">56</div>
<div class="a ln" style="left:-14px;top:683px;color:#858585">57</div>
<div class="a ln" style="left:-14px;top:731px;color:#858585">58</div>
<div class="a ln" style="left:-14px;top:779px;color:#858585">59</div>
<div class="a ln" style="left:-14px;top:827px;color:#858585">60</div>
<svg style="left:13px;top:595px" width="26" height="28"><path d="M3 3H14L23 14L14 25H3Z" stroke="#ffcc00" stroke-width="2.6" fill="none" stroke-linejoin="round"/><circle cx="10.5" cy="14" r="4.2" fill="#e51400"/></svg>
</div>
<div class="a" style="left:436px;top:114px;width:938px;height:8px;background:linear-gradient(rgba(0,0,0,.5),rgba(0,0,0,0))"></div>
<div class="a" style="left:1356px;top:114px;width:18px;height:841px;background:linear-gradient(90deg,rgba(0,0,0,0),rgba(0,0,0,.45))"></div>
<div class="a" style="left:508px;top:114px;width:838px;height:66px;background:#252526;border-radius:0 0 8px 8px;box-shadow:0 4px 10px rgba(0,0,0,.55)"></div>
<div class="a" style="left:508px;top:114px;width:6px;height:66px;background:#474747;border-left:2px solid #303030;border-radius:0 0 0 8px"></div>
<svg style="left:528px;top:136px" width="14" height="22"><path d="M2 1.5L12 11L2 20.5" stroke="#c5c5c5" stroke-width="2.2" fill="none"/></svg>
<div class="a" style="left:552px;top:120px;width:442px;height:50px;border-radius:5px;background:#3c3c3c"></div>
<div class="a" style="left:567px;top:129px;font-size:26px;line-height:32px;color:#a6a6a6">Find</div>
<div class="a" style="left:870px;top:131px;font-size:23px;line-height:30px;color:#c5c5c5">Aa</div>
<div class="a" style="left:912px;top:129px;font-size:23px;line-height:30px;color:#c5c5c5">ab</div>
<svg style="left:910px;top:151px" width="34" height="8"><path d="M1 0V6H33V0" stroke="#c5c5c5" stroke-width="2" fill="none"/></svg>
<div class="a" style="left:958px;top:150px;width:9px;height:9px;background:#c5c5c5"></div>
<div class="a" style="left:968px;top:124px;font-size:30px;line-height:36px;color:#c5c5c5">*</div>
<div class="a" style="left:1005px;top:131px;font-size:25px;line-height:32px;color:#cccccc">No results</div>
<svg style="left:1155px;top:133px" width="22" height="26"><path d="M11 25V2M1 12L11 2L21 12" stroke="#7f7f7f" stroke-width="2" fill="none"/></svg>
<svg style="left:1206px;top:133px" width="22" height="26"><path d="M11 1V24M1 14L11 24L21 14" stroke="#7f7f7f" stroke-width="2" fill="none"/></svg>
<svg style="left:1251px;top:135px" width="30" height="22"><path d="M0 2H22M0 11H29M0 20H17" stroke="#c5c5c5" stroke-width="2.2"/></svg>
<svg style="left:1305px;top:137px" width="18" height="18"><path d="M1 1L17 17M17 1L1 17" stroke="#c5c5c5" stroke-width="2.2"/></svg>
<div class="a" style="left:571px;top:-4px;width:362px;height:71px;border-radius:10px;background:#333333;box-shadow:0 2px 8px rgba(0,0,0,.5)"></div>
<svg style="left:597px;top:24px" width="14" height="22"><g fill="#8b8b8b"><rect x="0" y="0" width="4" height="4"/><rect x="9" y="0" width="4" height="4"/><rect x="0" y="9" width="4" height="4"/><rect x="9" y="9" width="4" height="4"/><rect x="0" y="18" width="4" height="4"/><rect x="9" y="18" width="4" height="4"/></g></svg>
<svg style="left:629px;top:20px" width="28" height="28"><path d="M2.5 2V26" stroke="#75beff" stroke-width="3"/><path d="M9.5 4L25 14L9.5 24Z" stroke="#75beff" stroke-width="2.6" fill="none" stroke-linejoin="round"/></svg>
<svg style="left:679px;top:19px" width="30" height="30"><path d="M3 13Q6 4 14 4Q22 4 25 10" stroke="#75beff" stroke-width="2.6" fill="none"/><path d="M26 3V11H18" stroke="#75beff" stroke-width="2.6" fill="none"/><circle cx="14" cy="24" r="3.5" fill="#75beff"/></svg>
<svg style="left:733px;top:18px" width="26" height="32"><path d="M13 1V17M6 10L13 17L20 10" stroke="#75beff" stroke-width="2.6" fill="none"/><circle cx="13" cy="26" r="3.5" fill="#75beff"/></svg>
<svg style="left:785px;top:18px" width="26" height="32"><path d="M13 19V3M6 10L13 3L20 10" stroke="#75beff" stroke-width="2.6" fill="none"/><circle cx="13" cy="26" r="3.5" fill="#75beff"/></svg>
<svg style="left:836px;top:20px" width="28" height="28"><path d="M5 8Q9 2 15 2Q26 3 26 14Q26 25 14 26Q3 25 2 14" stroke="#89d185" stroke-width="2.6" fill="none"/><path d="M3 2V10H11" stroke="#89d185" stroke-width="2.6" fill="none"/></svg>
<svg style="left:885px;top:19px" width="32" height="32"><path d="M8.7 13.6A5.6 5.6 0 0 0 16.6 21.5ZM8.7 21.5L2.9 27.3M10.8 15.5L13 11.6M14.7 19.7L18 17M14.1 7.6A5.7 5.7 0 0 1 22.4 15.5ZM22.3 7.5L28.4 1.4" stroke="#f0937b" stroke-width="2" fill="none" stroke-linecap="round"/></svg>
<div class="a" style="left:1472px;top:114px;width:2px;height:841px;background:#303030"></div>
<div class="a" style="left:1474px;top:659px;width:26px;height:3px;background:#b8b89a"></div>
<div class="a" style="left:1474px;top:662px;width:26px;height:9px;background:#5a5a2c"></div>
<svg style="left:1381.7px;top:114px" width="92" height="300" opacity="0.62"><rect x="0.0" y="1" width="9.5" height="1.8" fill="#569cd6"/><rect x="11.8" y="1" width="19.4" height="1.8" fill="#4fc1ff"/><rect x="33.5" y="1" width="1.7" height="1.8" fill="#d4d4d4"/><rect x="37.4" y="1" width="13.5" height="1.8" fill="#dcdcaa"/><rect x="51.2" y="1" width="1.7" height="1.8" fill="#d4d4d4"/><rect x="53.2" y="1" width="25.3" height="1.8" fill="#ce9178"/><rect x="78.8" y="1" width="1.7" height="1.8" fill="#d4d4d4"/><rect x="80.8" y="1" width="1.7" height="1.8" fill="#d4d4d4"/><rect x="0.0" y="5" width="9.5" height="1.8" fill="#569cd6"/><rect x="11.8" y="5" width="13.5" height="1.8" fill="#4fc1ff"/><rect x="27.6" y="5" width="1.7" height="1.8" fill="#d4d4d4"/><rect x="31.5" y="5" width="13.5" height="1.8" fill="#dcdcaa"/><rect x="45.3" y="5" width="1.7" height="1.8" fill="#d4d4d4"/><rect x="47.3" y="5" width="17.4" height="1.8" fill="#ce9178"/><rect x="65.0" y="5" width="1.7" height="1.8" fill="#d4d4d4"/><rect x="67.0" y="5" width="1.7" height="1.8" fill="#d4d4d4"/><rect x="0.0" y="9" width="9.5" height="1.8" fill="#569cd6"/><rect x="11.8" y="9" width="7.6" height="1.8" fill="#4fc1ff"/><rect x="21.7" y="9" width="1.7" height="1.8" fill="#d4d4d4"/><rect x="25.6" y="9" width="13.5" height="1.8" fill="#dcdcaa"/><rect x="39.4" y="9" width="1.7" height="1.8" fill="#d4d4d4"/><rect x="41.4" y="9" width="11.5" height="1.8" fill="#ce9178"/><rect x="53.2" y="9" width="1.7" height="1.8" fill="#d4d4d4"/><rect x="55.2" y="9" width="1.7" height="1.8" fill="#d4d4d4"/><rect x="0.0" y="17" width="19.4" height="1.8" fill="#4fc1ff"/><rect x="19.7" y="17" width="1.7" height="1.8" fill="#d4d4d4"/><rect x="21.7" y="17" width="41.1" height="1.8" fill="#dcdcaa"/><rect x="63.0" y="17" width="1.7" height="1.8" fill="#d4d4d4"/><rect x="65.0" y="17" width="1.7" height="1.8" fill="#d4d4d4"/><rect x="67.0" y="17" width="1.7" height="1.8" fill="#d4d4d4"/><rect x="0.0" y="25" width="9.5" height="1.8" fill="#569cd6"/><rect x="11.8" y="25" width="31.2" height="1.8" fill="#4fc1ff"/><rect x="45.3" y="25" width="1.7" height="1.8" fill="#d4d4d4"/><rect x="49.2" y="25" width="5.6" height="1.8" fill="#569cd6"/><rect x="57.1" y="25" width="19.4" height="1.8" fill="#4fc1ff"/><rect x="76.8" y="25" width="1.7" height="1.8" fill="#d4d4d4"/><rect x="78.8" y="25" width="11.2" height="1.8" fill="#dcdcaa"/><rect x="7.9" y="29" width="7.6" height="1.8" fill="#9cdcfe"/><rect x="15.8" y="29" width="1.7" height="1.8" fill="#d4d4d4"/><rect x="19.7" y="29" width="60.8" height="1.8" fill="#ce9178"/><rect x="80.8" y="29" width="1.7" height="1.8" fill="#d4d4d4"/><rect x="7.9" y="33" width="7.6" height="1.8" fill="#9cdcfe"/><rect x="15.8" y="33" width="1.7" height="1.8" fill="#d4d4d4"/><rect x="19.7" y="33" width="17.4" height="1.8" fill="#ce9178"/><rect x="39.4" y="33" width="3.6" height="1.8" fill="#ce9178"/><rect x="45.3" y="33" width="7.6" height="1.8" fill="#ce9178"/><rect x="55.2" y="33" width="15.5" height="1.8" fill="#ce9178"/><rect x="72.9" y="33" width="3.6" height="1.8" fill="#ce9178"/><rect x="78.8" y="33" width="11.2" height="1.8" fill="#ce9178"/><rect x="7.9" y="37" width="19.4" height="1.8" fill="#9cdcfe"/><rect x="27.6" y="37" width="1.7" height="1.8" fill="#d4d4d4"/><rect x="31.5" y="37" width="1.7" height="1.8" fill="#d4d4d4"/><rect x="33.5" y="37" width="11.5" height="1.8" fill="#ce9178"/><rect x="45.3" y="37" width="1.7" height="1.8" fill="#d4d4d4"/><rect x="49.2" y="37" width="17.4" height="1.8" fill="#ce9178"/><rect x="67.0" y="37" width="1.7" height="1.8" fill="#d4d4d4"/><rect x="70.9" y="37" width="15.5" height="1.8" fill="#ce9178"/><rect x="86.7" y="37" width="1.7" height="1.8" fill="#d4d4d4"/><rect x="88.7" y="37" width="1.3" height="1.8" fill="#d4d4d4"/><rect x="7.9" y="41" width="13.5" height="1.8" fill="#9cdcfe"/><rect x="21.7" y="41" width="1.7" height="1.8" fill="#d4d4d4"/><rect x="25.6" y="41" width="1.7" height="1.8" fill="#d4d4d4"/><rect x="27.6" y="41" width="9.5" height="1.8" fill="#b5cea8"/><rect x="37.4" y="41" width="1.7" height="1.8" fill="#d4d4d4"/><rect x="41.4" y="41" width="7.6" height="1.8" fill="#b5cea8"/><rect x="49.2" y="41" width="1.7" height="1.8" fill="#d4d4d4"/><rect x="53.2" y="41" width="9.5" height="1.8" fill="#b5cea8"/><rect x="63.0" y="41" width="1.7" height="1.8" fill="#d4d4d4"/><rect x="67.0" y="41" width="7.6" height="1.8" fill="#b5cea8"/><rect x="74.9" y="41" width="1.7" height="1.8" fill="#d4d4d4"/><rect x="78.8" y="41" width="5.6" height="1.8" fill="#b5cea8"/><rect x="84.7" y="41" width="1.7" height="1.8" fill="#d4d4d4"/><rect x="88.7" y="41" width="1.3" height="1.8" fill="#b5cea8"/><rect x="0.0" y="45" width="1.7" height="1.8" fill="#d4d4d4"/><rect x="2.0" y="45" width="1.7" height="1.8" fill="#d4d4d4"/><rect x="3.9" y="45" width="1.7" height="1.8" fill="#d4d4d4"/><rect x="0.0" y="53" width="9.5" height="1.8" fill="#569cd6"/><rect x="11.8" y="53" width="23.3" height="1.8" fill="#4fc1ff"/><rect x="37.4" y="53" width="1.7" height="1.8" fill="#d4d4d4"/><rect x="41.4" y="53" width="1.7" height="1.8" fill="#d4d4d4"/><rect x="43.3" y="53" width="5.6" height="1.8" fill="#9cdcfe"/><rect x="49.2" y="53" width="1.7" height="1.8" fill="#d4d4d4"/><rect x="53.2" y="53" width="5.6" height="1.8" fill="#9cdcfe"/><rect x="59.1" y="53" width="1.7" height="1.8" fill="#d4d4d4"/><rect x="63.0" y="53" width="7.6" height="1.8" fill="#9cdcfe"/><rect x="70.9" y="53" width="1.7" height="1.8" fill="#d4d4d4"/><rect x="74.9" y="53" width="3.6" height="1.8" fill="#569cd6"/><rect x="80.8" y="53" width="1.7" height="1.8" fill="#d4d4d4"/><rect x="3.9" y="57" width="9.5" height="1.8" fill="#569cd6"/><rect x="15.8" y="57" width="7.6" height="1.8" fill="#4fc1ff"/><rect x="25.6" y="57" width="1.7" height="1.8" fill="#d4d4d4"/><rect x="29.5" y="57" width="5.6" height="1.8" fill="#569cd6"/><rect x="37.4" y="57" width="5.6" height="1.8" fill="#dcdcaa"/><rect x="43.3" y="57" width="1.7" height="1.8" fill="#d4d4d4"/><rect x="45.3" y="57" width="5.6" height="1.8" fill="#9cdcfe"/><rect x="51.2" y="57" width="1.7" height="1.8" fill="#d4d4d4"/><rect x="53.2" y="57" width="5.6" height="1.8" fill="#9cdcfe"/><rect x="59.1" y="57" width="1.7" height="1.8" fill="#d4d4d4"/><rect x="63.0" y="57" width="27.0" height="1.8" fill="#ce9178"/><rect x="3.9" y="61" width="9.5" height="1.8" fill="#569cd6"/><rect x="15.8" y="61" width="7.6" height="1.8" fill="#4fc1ff"/><rect x="25.6" y="61" width="1.7" height="1.8" fill="#d4d4d4"/><rect x="29.5" y="61" width="31.2" height="1.8" fill="#4fc1ff"/><rect x="61.1" y="61" width="1.7" height="1.8" fill="#d4d4d4"/><rect x="63.0" y="61" width="19.4" height="1.8" fill="#dcdcaa"/><rect x="82.7" y="61" width="1.7" height="1.8" fill="#d4d4d4"/><rect x="84.7" y="61" width="1.7" height="1.8" fill="#d4d4d4"/><rect x="7.9" y="65" width="11.5" height="1.8" fill="#9cdcfe"/><rect x="19.7" y="65" width="1.7" height="1.8" fill="#d4d4d4"/><rect x="23.6" y="65" width="5.6" height="1.8" fill="#9cdcfe"/><rect x="29.5" y="65" width="1.7" height="1.8" fill="#d4d4d4"/><rect x="31.5" y="65" width="11.5" height="1.8" fill="#9cdcfe"/><rect x="43.3" y="65" width="1.7" height="1.8" fill="#d4d4d4"/><rect x="7.9" y="69" width="13.5" height="1.8" fill="#9cdcfe"/><rect x="21.7" y="69" width="1.7" height="1.8" fill="#d4d4d4"/><rect x="25.6" y="69" width="7.6" height="1.8" fill="#4fc1ff"/><rect x="3.9" y="73" width="1.7" height="1.8" fill="#d4d4d4"/><rect x="5.9" y="73" width="1.7" height="1.8" fill="#d4d4d4"/><rect x="7.9" y="73" width="1.7" height="1.8" fill="#d4d4d4"/><rect x="3.9" y="77" width="5.6" height="1.8" fill="#9cdcfe"/><rect x="9.8" y="77" width="1.7" height="1.8" fill="#d4d4d4"/><rect x="11.8" y="77" width="3.6" height="1.8" fill="#dcdcaa"/><rect x="15.8" y="77" width="1.7" height="1.8" fill="#d4d4d4"/><rect x="17.7" y="77" width="15.5" height="1.8" fill="#ce9178"/><rect x="33.5" y="77" width="1.7" height="1.8" fill="#d4d4d4"/><rect x="37.4" y="77" width="1.7" height="1.8" fill="#d4d4d4"/><rect x="39.4" y="77" width="1.7" height="1.8" fill="#d4d4d4"/><rect x="43.3" y="77" width="3.6" height="1.8" fill="#569cd6"/><rect x="49.2" y="77" width="1.7" height="1.8" fill="#d4d4d4"/><rect x="7.9" y="81" width="7.6" height="1.8" fill="#dcdcaa"/><rect x="15.8" y="81" width="1.7" height="1.8" fill="#d4d4d4"/><rect x="17.7" y="81" width="1.7" height="1.8" fill="#d4d4d4"/><rect x="11.8" y="85" width="7.6" height="1.8" fill="#9cdcfe"/><rect x="19.7" y="85" width="1.7" height="1.8" fill="#d4d4d4"/><rect x="23.6" y="85" width="5.6" height="1.8" fill="#9cdcfe"/><rect x="29.5" y="85" width="1.7" height="1.8" fill="#d4d4d4"/><rect x="31.5" y="85" width="19.4" height="1.8" fill="#9cdcfe"/><rect x="7.9" y="89" width="1.7" height="1.8" fill="#d4d4d4"/><rect x="9.8" y="89" width="1.7" height="1.8" fill="#d4d4d4"/><rect x="11.8" y="89" width="1.7" height="1.8" fill="#d4d4d4"/><rect x="3.9" y="93" width="1.7" height="1.8" fill="#d4d4d4"/><rect x="5.9" y="93" width="1.7" height="1.8" fill="#d4d4d4"/><rect x="7.9" y="93" width="1.7" height="1.8" fill="#d4d4d4"/><rect x="3.9" y="97" width="7.6" height="1.8" fill="#dcdcaa"/><rect x="11.8" y="97" width="1.7" height="1.8" fill="#d4d4d4"/><rect x="13.8" y="97" width="1.7" height="1.8" fill="#d4d4d4"/><rect x="15.8" y="97" width="1.7" height="1.8" fill="#d4d4d4"/><rect x="0.0" y="101" width="1.7" height="1.8" fill="#d4d4d4"/><rect x="0.0" y="109" width="9.5" height="1.8" fill="#569cd6"/><rect x="11.8" y="109" width="5.6" height="1.8" fill="#4fc1ff"/><rect x="19.7" y="109" width="1.7" height="1.8" fill="#d4d4d4"/><rect x="23.6" y="109" width="13.5" height="1.8" fill="#dcdcaa"/><rect x="37.4" y="109" width="1.7" height="1.8" fill="#d4d4d4"/><rect x="39.4" y="109" width="1.7" height="1.8" fill="#d4d4d4"/><rect x="41.4" y="109" width="1.7" height="1.8" fill="#d4d4d4"/><rect x="0.0" y="113" width="9.5" height="1.8" fill="#569cd6"/><rect x="11.8" y="113" width="11.5" height="1.8" fill="#4fc1ff"/><rect x="25.6" y="113" width="1.7" height="1.8" fill="#d4d4d4"/><rect x="29.5" y="113" width="7.6" height="1.8" fill="#4fc1ff"/><rect x="37.4" y="113" width="1.7" height="1.8" fill="#d4d4d4"/><rect x="39.4" y="113" width="23.3" height="1.8" fill="#dcdcaa"/><rect x="63.0" y="113" width="1.7" height="1.8" fill="#d4d4d4"/><rect x="65.0" y="113" width="5.6" height="1.8" fill="#4fc1ff"/><rect x="70.9" y="113" width="1.7" height="1.8" fill="#d4d4d4"/><rect x="72.9" y="113" width="1.7" height="1.8" fill="#d4d4d4"/><rect x="0.0" y="121" width="3.6" height="1.8" fill="#6a9955"/><rect x="5.9" y="121" width="7.6" height="1.8" fill="#6a9955"/><rect x="15.8" y="121" width="74.2" height="1.8" fill="#6a9955"/><rect x="0.0" y="125" width="9.5" height="1.8" fill="#569cd6"/><rect x="11.8" y="125" width="19.4" height="1.8" fill="#4fc1ff"/><rect x="33.5" y="125" width="1.7" height="1.8" fill="#d4d4d4"/><rect x="37.4" y="125" width="5.6" height="1.8" fill="#4fc1ff"/><rect x="43.3" y="125" width="1.7" height="1.8" fill="#d4d4d4"/><rect x="45.3" y="125" width="5.6" height="1.8" fill="#dcdcaa"/><rect x="51.2" y="125" width="1.7" height="1.8" fill="#d4d4d4"/><rect x="53.2" y="125" width="9.5" height="1.8" fill="#ce9178"/><rect x="63.0" y="125" width="1.7" height="1.8" fill="#d4d4d4"/><rect x="67.0" y="125" width="5.6" height="1.8" fill="#569cd6"/><rect x="74.9" y="125" width="15.1" height="1.8" fill="#ce9178"/><rect x="0.0" y="133" width="3.6" height="1.8" fill="#6a9955"/><rect x="5.9" y="133" width="27.3" height="1.8" fill="#6a9955"/><rect x="35.5" y="133" width="11.5" height="1.8" fill="#6a9955"/><rect x="49.2" y="133" width="5.6" height="1.8" fill="#6a9955"/><rect x="57.1" y="133" width="5.6" height="1.8" fill="#6a9955"/><rect x="65.0" y="133" width="9.5" height="1.8" fill="#6a9955"/><rect x="76.8" y="133" width="3.6" height="1.8" fill="#6a9955"/><rect x="82.7" y="133" width="7.3" height="1.8" fill="#6a9955"/><rect x="0.0" y="137" width="3.6" height="1.8" fill="#6a9955"/><rect x="5.9" y="137" width="15.5" height="1.8" fill="#6a9955"/><rect x="23.6" y="137" width="3.6" height="1.8" fill="#6a9955"/><rect x="29.5" y="137" width="15.5" height="1.8" fill="#6a9955"/><rect x="47.3" y="137" width="3.6" height="1.8" fill="#6a9955"/><rect x="53.2" y="137" width="13.5" height="1.8" fill="#6a9955"/><rect x="0.0" y="141" width="5.6" height="1.8" fill="#4fc1ff"/><rect x="5.9" y="141" width="1.7" height="1.8" fill="#d4d4d4"/><rect x="7.9" y="141" width="5.6" height="1.8" fill="#dcdcaa"/><rect x="13.8" y="141" width="1.7" height="1.8" fill="#d4d4d4"/><rect x="15.8" y="141" width="15.5" height="1.8" fill="#ce9178"/><rect x="31.5" y="141" width="1.7" height="1.8" fill="#d4d4d4"/><rect x="35.5" y="141" width="1.7" height="1.8" fill="#d4d4d4"/><rect x="37.4" y="141" width="5.6" height="1.8" fill="#9cdcfe"/><rect x="43.3" y="141" width="1.7" height="1.8" fill="#d4d4d4"/><rect x="47.3" y="141" width="5.6" height="1.8" fill="#9cdcfe"/><rect x="53.2" y="141" width="1.7" height="1.8" fill="#d4d4d4"/><rect x="57.1" y="141" width="3.6" height="1.8" fill="#569cd6"/><rect x="63.0" y="141" width="5.6" height="1.8" fill="#9cdcfe"/><rect x="69.0" y="141" width="1.7" height="1.8" fill="#d4d4d4"/><rect x="70.9" y="141" width="11.5" height="1.8" fill="#dcdcaa"/><rect x="82.7" y="141" width="1.7" height="1.8" fill="#d4d4d4"/><rect x="84.7" y="141" width="5.3" height="1.8" fill="#b5cea8"/><rect x="0.0" y="145" width="5.6" height="1.8" fill="#4fc1ff"/><rect x="5.9" y="145" width="1.7" height="1.8" fill="#d4d4d4"/><rect x="7.9" y="145" width="5.6" height="1.8" fill="#dcdcaa"/><rect x="13.8" y="145" width="1.7" height="1.8" fill="#d4d4d4"/><rect x="15.8" y="145" width="13.5" height="1.8" fill="#ce9178"/><rect x="29.5" y="145" width="1.7" height="1.8" fill="#d4d4d4"/><rect x="33.5" y="145" width="1.7" height="1.8" fill="#d4d4d4"/><rect x="35.5" y="145" width="5.6" height="1.8" fill="#9cdcfe"/><rect x="41.4" y="145" width="1.7" height="1.8" fill="#d4d4d4"/><rect x="45.3" y="145" width="5.6" height="1.8" fill="#9cdcfe"/><rect x="51.2" y="145" width="1.7" height="1.8" fill="#d4d4d4"/><rect x="55.2" y="145" width="3.6" height="1.8" fill="#569cd6"/><rect x="61.1" y="145" width="5.6" height="1.8" fill="#9cdcfe"/><rect x="67.0" y="145" width="1.7" height="1.8" fill="#d4d4d4"/><rect x="69.0" y="145" width="11.5" height="1.8" fill="#dcdcaa"/><rect x="80.8" y="145" width="1.7" height="1.8" fill="#d4d4d4"/><rect x="82.7" y="145" width="5.6" height="1.8" fill="#b5cea8"/><rect x="88.7" y="145" width="1.3" height="1.8" fill="#d4d4d4"/><rect x="0.0" y="149" width="5.6" height="1.8" fill="#4fc1ff"/><rect x="5.9" y="149" width="1.7" height="1.8" fill="#d4d4d4"/><rect x="7.9" y="149" width="5.6" height="1.8" fill="#dcdcaa"/><rect x="13.8" y="149" width="1.7" height="1.8" fill="#d4d4d4"/><rect x="15.8" y="149" width="19.4" height="1.8" fill="#ce9178"/><rect x="35.5" y="149" width="1.7" height="1.8" fill="#d4d4d4"/><rect x="39.4" y="149" width="1.7" height="1.8" fill="#d4d4d4"/><rect x="41.4" y="149" width="5.6" height="1.8" fill="#9cdcfe"/><rect x="47.3" y="149" width="1.7" height="1.8" fill="#d4d4d4"/><rect x="51.2" y="149" width="5.6" height="1.8" fill="#9cdcfe"/><rect x="57.1" y="149" width="1.7" height="1.8" fill="#d4d4d4"/><rect x="61.1" y="149" width="7.6" height="1.8" fill="#9cdcfe"/><rect x="69.0" y="149" width="1.7" height="1.8" fill="#d4d4d4"/><rect x="72.9" y="149" width="3.6" height="1.8" fill="#569cd6"/><rect x="78.8" y="149" width="1.7" height="1.8" fill="#d4d4d4"/><rect x="3.9" y="153" width="5.6" height="1.8" fill="#9cdcfe"/><rect x="9.8" y="153" width="1.7" height="1.8" fill="#d4d4d4"/><rect x="11.8" y="153" width="5.6" height="1.8" fill="#dcdcaa"/><rect x="17.7" y="153" width="1.7" height="1.8" fill="#d4d4d4"/><rect x="19.7" y="153" width="27.3" height="1.8" fill="#ce9178"/><rect x="47.3" y="153" width="1.7" height="1.8" fill="#d4d4d4"/><rect x="51.2" y="153" width="19.4" height="1.8" fill="#4fc1ff"/><rect x="70.9" y="153" width="1.7" height="1.8" fill="#d4d4d4"/><rect x="72.9" y="153" width="15.5" height="1.8" fill="#9cdcfe"/><rect x="88.7" y="153" width="1.3" height="1.8" fill="#d4d4d4"/><rect x="3.9" y="157" width="5.6" height="1.8" fill="#9cdcfe"/><rect x="9.8" y="157" width="1.7" height="1.8" fill="#d4d4d4"/><rect x="11.8" y="157" width="5.6" height="1.8" fill="#dcdcaa"/><rect x="17.7" y="157" width="1.7" height="1.8" fill="#d4d4d4"/><rect x="19.7" y="157" width="19.4" height="1.8" fill="#4fc1ff"/><rect x="39.4" y="157" width="1.7" height="1.8" fill="#d4d4d4"/><rect x="41.4" y="157" width="15.5" height="1.8" fill="#9cdcfe"/><rect x="57.1" y="157" width="1.7" height="1.8" fill="#d4d4d4"/><rect x="59.1" y="157" width="13.5" height="1.8" fill="#dcdcaa"/><rect x="72.9" y="157" width="1.7" height="1.8" fill="#d4d4d4"/><rect x="74.9" y="157" width="1.7" height="1.8" fill="#d4d4d4"/><rect x="76.8" y="157" width="1.7" height="1.8" fill="#d4d4d4"/><rect x="78.8" y="157" width="1.7" height="1.8" fill="#d4d4d4"/><rect x="0.0" y="161" width="1.7" height="1.8" fill="#d4d4d4"/><rect x="2.0" y="161" width="1.7" height="1.8" fill="#d4d4d4"/><rect x="3.9" y="161" width="1.7" height="1.8" fill="#d4d4d4"/><rect x="0.0" y="169" width="3.6" height="1.8" fill="#6a9955"/><rect x="5.9" y="169" width="7.6" height="1.8" fill="#6a9955"/><rect x="15.8" y="169" width="11.5" height="1.8" fill="#6a9955"/><rect x="29.5" y="169" width="9.5" height="1.8" fill="#6a9955"/><rect x="41.4" y="169" width="9.5" height="1.8" fill="#6a9955"/><rect x="0.0" y="173" width="5.6" height="1.8" fill="#4fc1ff"/><rect x="5.9" y="173" width="1.7" height="1.8" fill="#d4d4d4"/><rect x="7.9" y="173" width="5.6" height="1.8" fill="#dcdcaa"/><rect x="13.8" y="173" width="1.7" height="1.8" fill="#d4d4d4"/><rect x="15.8" y="173" width="23.3" height="1.8" fill="#4fc1ff"/><rect x="39.4" y="173" width="1.7" height="1.8" fill="#d4d4d4"/><rect x="41.4" y="173" width="1.7" height="1.8" fill="#d4d4d4"/><rect x="0.0" y="181" width="3.6" height="1.8" fill="#6a9955"/><rect x="5.9" y="181" width="5.6" height="1.8" fill="#6a9955"/><rect x="13.8" y="181" width="11.5" height="1.8" fill="#6a9955"/><rect x="27.6" y="181" width="9.5" height="1.8" fill="#6a9955"/><rect x="39.4" y="181" width="9.5" height="1.8" fill="#6a9955"/><rect x="0.0" y="185" width="9.5" height="1.8" fill="#569cd6"/><rect x="11.8" y="185" width="7.6" height="1.8" fill="#4fc1ff"/><rect x="21.7" y="185" width="1.7" height="1.8" fill="#d4d4d4"/><rect x="25.6" y="185" width="13.5" height="1.8" fill="#dcdcaa"/><rect x="39.4" y="185" width="1.7" height="1.8" fill="#d4d4d4"/><rect x="41.4" y="185" width="11.5" height="1.8" fill="#ce9178"/><rect x="53.2" y="185" width="1.7" height="1.8" fill="#d4d4d4"/><rect x="55.2" y="185" width="1.7" height="1.8" fill="#d4d4d4"/><rect x="57.1" y="185" width="1.7" height="1.8" fill="#d4d4d4"/><rect x="3.9" y="189" width="9.5" height="1.8" fill="#9cdcfe"/><rect x="13.8" y="189" width="1.7" height="1.8" fill="#d4d4d4"/><rect x="17.7" y="189" width="19.4" height="1.8" fill="#4fc1ff"/><rect x="39.4" y="189" width="1.7" height="1.8" fill="#d4d4d4"/><rect x="43.3" y="189" width="11.5" height="1.8" fill="#ce9178"/><rect x="57.1" y="189" width="1.7" height="1.8" fill="#d4d4d4"/><rect x="61.1" y="189" width="13.5" height="1.8" fill="#ce9178"/><rect x="74.9" y="189" width="1.7" height="1.8" fill="#d4d4d4"/><rect x="0.0" y="193" width="1.7" height="1.8" fill="#d4d4d4"/><rect x="2.0" y="193" width="1.7" height="1.8" fill="#d4d4d4"/><rect x="3.9" y="193" width="1.7" height="1.8" fill="#d4d4d4"/><rect x="0.0" y="197" width="5.6" height="1.8" fill="#4fc1ff"/><rect x="5.9" y="197" width="1.7" height="1.8" fill="#d4d4d4"/><rect x="7.9" y="197" width="5.6" height="1.8" fill="#dcdcaa"/><rect x="13.8" y="197" width="1.7" height="1.8" fill="#d4d4d4"/><rect x="15.8" y="197" width="13.5" height="1.8" fill="#dcdcaa"/><rect x="29.5" y="197" width="1.7" height="1.8" fill="#d4d4d4"/><rect x="31.5" y="197" width="21.4" height="1.8" fill="#ce9178"/><rect x="53.2" y="197" width="1.7" height="1.8" fill="#d4d4d4"/><rect x="55.2" y="197" width="1.7" height="1.8" fill="#d4d4d4"/><rect x="57.1" y="197" width="1.7" height="1.8" fill="#d4d4d4"/><rect x="59.1" y="197" width="11.5" height="1.8" fill="#9cdcfe"/><rect x="70.9" y="197" width="1.7" height="1.8" fill="#d4d4d4"/><rect x="74.9" y="197" width="7.6" height="1.8" fill="#4fc1ff"/><rect x="82.7" y="197" width="1.7" height="1.8" fill="#d4d4d4"/><rect x="84.7" y="197" width="1.7" height="1.8" fill="#d4d4d4"/><rect x="86.7" y="197" width="1.7" height="1.8" fill="#d4d4d4"/><rect x="88.7" y="197" width="1.3" height="1.8" fill="#d4d4d4"/><rect x="0.0" y="205" width="5.6" height="1.8" fill="#4fc1ff"/><rect x="5.9" y="205" width="1.7" height="1.8" fill="#d4d4d4"/><rect x="7.9" y="205" width="5.6" height="1.8" fill="#dcdcaa"/><rect x="13.8" y="205" width="1.7" height="1.8" fill="#d4d4d4"/><rect x="15.8" y="205" width="5.6" height="1.8" fill="#ce9178"/><rect x="21.7" y="205" width="1.7" height="1.8" fill="#d4d4d4"/><rect x="25.6" y="205" width="1.7" height="1.8" fill="#d4d4d4"/><rect x="27.6" y="205" width="5.6" height="1.8" fill="#9cdcfe"/><rect x="33.5" y="205" width="1.7" height="1.8" fill="#d4d4d4"/><rect x="37.4" y="205" width="5.6" height="1.8" fill="#9cdcfe"/><rect x="43.3" y="205" width="1.7" height="1.8" fill="#d4d4d4"/><rect x="47.3" y="205" width="3.6" height="1.8" fill="#569cd6"/><rect x="53.2" y="205" width="1.7" height="1.8" fill="#d4d4d4"/><rect x="3.9" y="209" width="3.6" height="1.8" fill="#6a9955"/><rect x="9.8" y="209" width="5.6" height="1.8" fill="#6a9955"/><rect x="17.7" y="209" width="13.5" height="1.8" fill="#6a9955"/><rect x="33.5" y="209" width="3.6" height="1.8" fill="#6a9955"/><rect x="39.4" y="209" width="11.5" height="1.8" fill="#6a9955"/><rect x="53.2" y="209" width="17.4" height="1.8" fill="#6a9955"/><rect x="72.9" y="209" width="3.6" height="1.8" fill="#6a9955"/><rect x="78.8" y="209" width="5.6" height="1.8" fill="#6a9955"/><rect x="86.7" y="209" width="3.3" height="1.8" fill="#6a9955"/><rect x="3.9" y="213" width="5.6" height="1.8" fill="#9cdcfe"/><rect x="9.8" y="213" width="1.7" height="1.8" fill="#d4d4d4"/><rect x="11.8" y="213" width="5.6" height="1.8" fill="#9cdcfe"/><rect x="17.7" y="213" width="1.7" height="1.8" fill="#d4d4d4"/><rect x="19.7" y="213" width="7.6" height="1.8" fill="#dcdcaa"/><rect x="27.6" y="213" width="1.7" height="1.8" fill="#d4d4d4"/><rect x="29.5" y="213" width="1.7" height="1.8" fill="#d4d4d4"/><rect x="31.5" y="213" width="13.5" height="1.8" fill="#9cdcfe"/><rect x="45.3" y="213" width="1.7" height="1.8" fill="#d4d4d4"/><rect x="49.2" y="213" width="11.5" height="1.8" fill="#ce9178"/><rect x="63.0" y="213" width="7.6" height="1.8" fill="#ce9178"/><rect x="72.9" y="213" width="13.5" height="1.8" fill="#ce9178"/><rect x="88.7" y="213" width="1.3" height="1.8" fill="#ce9178"/><rect x="3.9" y="217" width="5.6" height="1.8" fill="#9cdcfe"/><rect x="9.8" y="217" width="1.7" height="1.8" fill="#d4d4d4"/><rect x="11.8" y="217" width="7.6" height="1.8" fill="#dcdcaa"/><rect x="19.7" y="217" width="1.7" height="1.8" fill="#d4d4d4"/><rect x="21.7" y="217" width="11.5" height="1.8" fill="#ce9178"/><rect x="35.5" y="217" width="7.6" height="1.8" fill="#ce9178"/><rect x="45.3" y="217" width="13.5" height="1.8" fill="#ce9178"/><rect x="61.1" y="217" width="13.5" height="1.8" fill="#ce9178"/><rect x="76.8" y="217" width="13.2" height="1.8" fill="#ce9178"/><rect x="0.0" y="221" width="1.7" height="1.8" fill="#d4d4d4"/><rect x="2.0" y="221" width="1.7" height="1.8" fill="#d4d4d4"/><rect x="3.9" y="221" width="1.7" height="1.8" fill="#d4d4d4"/><rect x="0.0" y="229" width="5.6" height="1.8" fill="#4fc1ff"/><rect x="5.9" y="229" width="1.7" height="1.8" fill="#d4d4d4"/><rect x="7.9" y="229" width="5.6" height="1.8" fill="#dcdcaa"/><rect x="13.8" y="229" width="1.7" height="1.8" fill="#d4d4d4"/><rect x="15.8" y="229" width="5.6" height="1.8" fill="#ce9178"/><rect x="21.7" y="229" width="1.7" height="1.8" fill="#d4d4d4"/><rect x="25.6" y="229" width="1.7" height="1.8" fill="#d4d4d4"/><rect x="27.6" y="229" width="5.6" height="1.8" fill="#9cdcfe"/><rect x="33.5" y="229" width="1.7" height="1.8" fill="#d4d4d4"/><rect x="37.4" y="229" width="5.6" height="1.8" fill="#9cdcfe"/><rect x="43.3" y="229" width="1.7" height="1.8" fill="#d4d4d4"/><rect x="47.3" y="229" width="3.6" height="1.8" fill="#569cd6"/><rect x="53.2" y="229" width="1.7" height="1.8" fill="#d4d4d4"/><rect x="3.9" y="233" width="5.6" height="1.8" fill="#9cdcfe"/><rect x="9.8" y="233" width="1.7" height="1.8" fill="#d4d4d4"/><rect x="11.8" y="233" width="11.5" height="1.8" fill="#dcdcaa"/><rect x="23.6" y="233" width="1.7" height="1.8" fill="#d4d4d4"/><rect x="25.6" y="233" width="5.6" height="1.8" fill="#b5cea8"/><rect x="31.5" y="233" width="1.7" height="1.8" fill="#d4d4d4"/><rect x="33.5" y="233" width="1.7" height="1.8" fill="#d4d4d4"/><rect x="35.5" y="233" width="7.6" height="1.8" fill="#dcdcaa"/><rect x="43.3" y="233" width="1.7" height="1.8" fill="#d4d4d4"/><rect x="45.3" y="233" width="7.6" height="1.8" fill="#ce9178"/><rect x="55.2" y="233" width="11.5" height="1.8" fill="#ce9178"/><rect x="67.0" y="233" width="1.7" height="1.8" fill="#d4d4d4"/><rect x="69.0" y="233" width="1.7" height="1.8" fill="#d4d4d4"/><rect x="0.0" y="237" width="1.7" height="1.8" fill="#d4d4d4"/><rect x="2.0" y="237" width="1.7" height="1.8" fill="#d4d4d4"/><rect x="3.9" y="237" width="1.7" height="1.8" fill="#d4d4d4"/><rect x="0.0" y="245" width="3.6" height="1.8" fill="#6a9955"/><rect x="5.9" y="245" width="11.5" height="1.8" fill="#6a9955"/><rect x="19.7" y="245" width="5.6" height="1.8" fill="#6a9955"/><rect x="27.6" y="245" width="11.5" height="1.8" fill="#6a9955"/><rect x="0.0" y="249" width="9.5" height="1.8" fill="#569cd6"/><rect x="11.8" y="249" width="7.6" height="1.8" fill="#4fc1ff"/><rect x="21.7" y="249" width="1.7" height="1.8" fill="#d4d4d4"/><rect x="25.6" y="249" width="13.5" height="1.8" fill="#4fc1ff"/><rect x="39.4" y="249" width="1.7" height="1.8" fill="#d4d4d4"/><rect x="41.4" y="249" width="5.6" height="1.8" fill="#9cdcfe"/><rect x="47.3" y="249" width="1.7" height="1.8" fill="#d4d4d4"/><rect x="49.2" y="249" width="7.6" height="1.8" fill="#4fc1ff"/><rect x="59.1" y="249" width="1.7" height="1.8" fill="#d4d4d4"/><rect x="61.1" y="249" width="1.7" height="1.8" fill="#d4d4d4"/><rect x="65.0" y="249" width="7.6" height="1.8" fill="#b5cea8"/><rect x="72.9" y="249" width="1.7" height="1.8" fill="#d4d4d4"/><rect x="0.0" y="253" width="11.5" height="1.8" fill="#4fc1ff"/><rect x="11.8" y="253" width="1.7" height="1.8" fill="#d4d4d4"/><rect x="13.8" y="253" width="11.5" height="1.8" fill="#dcdcaa"/><rect x="25.6" y="253" width="1.7" height="1.8" fill="#d4d4d4"/><rect x="27.6" y="253" width="7.6" height="1.8" fill="#4fc1ff"/><rect x="35.5" y="253" width="1.7" height="1.8" fill="#d4d4d4"/><rect x="39.4" y="253" width="1.7" height="1.8" fill="#d4d4d4"/><rect x="41.4" y="253" width="1.7" height="1.8" fill="#d4d4d4"/><rect x="45.3" y="253" width="3.6" height="1.8" fill="#569cd6"/><rect x="51.2" y="253" width="1.7" height="1.8" fill="#d4d4d4"/><rect x="3.9" y="257" width="13.5" height="1.8" fill="#4fc1ff"/><rect x="17.7" y="257" width="1.7" height="1.8" fill="#d4d4d4"/><rect x="19.7" y="257" width="5.6" height="1.8" fill="#dcdcaa"/><rect x="25.6" y="257" width="1.7" height="1.8" fill="#d4d4d4"/><rect x="27.6" y="257" width="7.6" height="1.8" fill="#ce9178"/><rect x="37.4" y="257" width="13.5" height="1.8" fill="#ce9178"/><rect x="53.2" y="257" width="3.6" height="1.8" fill="#ce9178"/><rect x="59.1" y="257" width="7.6" height="1.8" fill="#ce9178"/><rect x="69.0" y="257" width="15.5" height="1.8" fill="#ce9178"/><rect x="84.7" y="257" width="1.7" height="1.8" fill="#d4d4d4"/><rect x="86.7" y="257" width="1.7" height="1.8" fill="#d4d4d4"/><rect x="0.0" y="261" width="1.7" height="1.8" fill="#d4d4d4"/><rect x="2.0" y="261" width="1.7" height="1.8" fill="#d4d4d4"/><rect x="3.9" y="261" width="1.7" height="1.8" fill="#d4d4d4"/></svg>
<div class="a" style="left:436px;top:955px;width:1064px;height:891px;background:#1e1e1e;border-top:2px solid #3a3a3a"></div>
<div class="a" style="left:476px;top:976px;font-size:21.5px;line-height:30px;white-space:nowrap;color:#9d9d9d">PROBLEMS</div>
<div class="a" style="left:644px;top:976px;font-size:21.5px;line-height:30px;white-space:nowrap;color:#9d9d9d">OUTPUT</div>
<div class="a" style="left:784px;top:976px;font-size:21.5px;line-height:30px;white-space:nowrap;color:#e7e7e7">DEBUG CONSOLE</div>
<div class="a" style="left:1022px;top:976px;font-size:21.5px;line-height:30px;white-space:nowrap;color:#9d9d9d">TERMINAL</div>
<div class="a" style="left:780px;top:1015px;width:197px;height:3px;background:#e7e7e7"></div>
<svg style="left:1336px;top:978px" width="30" height="26"><path d="M0 3H27M0 10H27M0 17H14M0 24H14M17 16L25 24M25 16L17 24" stroke="#c5c5c5" stroke-width="2.2"/></svg>
<svg style="left:1392px;top:983px" width="22" height="14"><path d="M1 13L11 2L21 13" stroke="#c5c5c5" stroke-width="2.2" fill="none"/></svg>
<svg style="left:1445px;top:981px" width="20" height="20"><path d="M1 1L19 19M19 1L1 19" stroke="#c5c5c5" stroke-width="2.2"/></svg>
<div class="a" style="left:476px;top:1044px;width:984px;height:48px;border-radius:4px;background:#3c3c3c"></div>
<div class="a" style="left:491px;top:1053px;font-size:25.5px;line-height:30px;color:#9a9a9a;white-space:nowrap">Filter (e.g. text, !exclude)</div>
<div class="a" style="left:496px;top:1113px;font-family:'Liberation Mono',monospace;font-size:24px;line-height:34px;white-space:pre;-webkit-text-stroke:0.3px currentColor;color:#4f98f0">App started on PORT 3000</div>
<div class="a" style="left:496px;top:1147px;font-family:'Liberation Mono',monospace;font-size:24px;line-height:34px;white-space:pre;-webkit-text-stroke:0.3px currentColor;color:#ec8a72">(node:61) [DEP0152] DeprecationWarning: Custom PerformanceEntr</div>
<div class="a" style="left:496px;top:1181px;font-family:'Liberation Mono',monospace;font-size:24px;line-height:34px;white-space:pre;-webkit-text-stroke:0.3px currentColor;color:#ec8a72">y accessors are deprecated. Please use the detail property.</div>
<div class="a" style="left:496px;top:1215px;font-family:'Liberation Mono',monospace;font-size:24px;line-height:34px;white-space:pre;-webkit-text-stroke:0.3px currentColor;color:#ec8a72">(Use `node --trace-deprecation ...` to show where the warning</div>
<div class="a" style="left:496px;top:1249px;font-family:'Liberation Mono',monospace;font-size:24px;line-height:34px;white-space:pre;-webkit-text-stroke:0.3px currentColor;color:#ec8a72">was created)</div>
<div class="a" style="left:1310px;top:1113px;width:173px;text-align:right;font-family:'Liberation Mono',monospace;font-size:24px;line-height:34px;white-space:pre;-webkit-text-stroke:0.3px currentColor;color:#cccccc;text-decoration:underline">server.js:65</div>
<div class="a" style="left:1310px;top:1147px;width:173px;text-align:right;font-family:'Liberation Mono',monospace;font-size:24px;line-height:34px;white-space:pre;-webkit-text-stroke:0.3px currentColor;color:#cccccc"><span style="font-family:'Liberation Sans',sans-serif">…</span><span style="text-decoration:underline">g:50</span></div>
<div class="a" style="left:436px;top:1812px;width:1064px;height:2px;background:#3a3a3a"></div>
<svg style="left:463px;top:1820px" width="14" height="24"><path d="M2 2L12 12L2 22" stroke="#c5c5c5" stroke-width="2.2" fill="none"/></svg>
<div class="a" style="left:0;top:1846px;width:1500px;height:44px;background:#bf6b40"></div>
<svg style="left:31px;top:1856px" width="26" height="26"><circle cx="13" cy="13" r="11.5" stroke="#fff" stroke-width="2.2" fill="none"/><path d="M8.5 8.5L17.5 17.5M17.5 8.5L8.5 17.5" stroke="#fff" stroke-width="2.2"/></svg>
<div class="a" style="left:66px;top:1853px;font-size:25.5px;line-height:32px;color:#ffffff;white-space:nowrap">0</div>
<svg style="left:89px;top:1855px" width="26" height="26"><path d="M13 2L25 24H1Z" stroke="#fff" stroke-width="2.2" fill="none" stroke-linejoin="round"/><path d="M13 9V17M13 19.5V22" stroke="#fff" stroke-width="2.4"/></svg>
<div class="a" style="left:122px;top:1853px;font-size:25.5px;line-height:32px;color:#ffffff;white-space:nowrap">0</div>
<svg style="left:168px;top:1853px" width="30" height="32"><path d="M12 2V12M12 2L28 12L22 16" stroke="#fff" stroke-width="2.2" fill="none"/><path d="M5 22Q5 16 9.5 16Q14 16 14 22Q14 29 9.5 29Q5 29 5 22Z" stroke="#fff" stroke-width="2" fill="none"/><path d="M1 20H5M14 20H18M1 26H5M14 26H18M3 31L6 28M16 31L13 28" stroke="#fff" stroke-width="1.8"/></svg>
<div class="a" style="left:229px;top:1853px;font-size:25.5px;line-height:32px;color:#ffffff;white-space:nowrap">docker-desktop</div>
<svg style="left:442px;top:1857px" width="26" height="20"><path d="M6 18Q1 18 1 13Q1 8 6 8Q7 2 13 2Q19 2 20 8Q25 8 25 13Q25 18 20 18Z" stroke="#fff" stroke-width="2" fill="none"/></svg>
<div class="a" style="left:475px;top:1853px;font-size:25.5px;line-height:32px;color:#ffffff;white-space:nowrap">OpenShift</div>
<div class="a" style="left:620px;top:1853px;font-size:25.5px;line-height:32px;color:#ffffff;white-space:nowrap">odo-dev</div>
<div class="a" style="left:887px;top:1853px;font-size:25.5px;line-height:32px;color:#ffffff;white-space:nowrap">Spaces: 2</div>
<div class="a" style="left:1032px;top:1853px;font-size:25.5px;line-height:32px;color:#ffffff;white-space:nowrap">UTF-8</div>
<div class="a" style="left:1136px;top:1853px;font-size:25.5px;line-height:32px;color:#ffffff;white-space:nowrap">LF</div>
<svg style="left:1194px;top:1858px" width="24" height="24"><path d="M7 1.5Q3 1.5 3 5V8.5Q3 12 0.5 12Q3 12 3 15.5V19Q3 22.5 7 22.5M17 1.5Q21 1.5 21 5V8.5Q21 12 23.5 12Q21 12 21 15.5V19Q21 22.5 17 22.5" stroke="#fff" stroke-width="2" fill="none"/></svg>
<div class="a" style="left:1232px;top:1853px;font-size:25.5px;line-height:32px;color:#ffffff;white-space:nowrap">JavaScript</div>
<svg style="left:1383px;top:1855px" width="28" height="28"><circle cx="10" cy="11" r="5" stroke="#fff" stroke-width="2" fill="none"/><path d="M1 26Q2 18 10 18Q18 18 19 26M8 2H26V16H20" stroke="#fff" stroke-width="2" fill="none"/><path d="M18 9L21 12L25 6" stroke="#fff" stroke-width="1.8" fill="none"/></svg>
<svg style="left:1442px;top:1853px" width="28" height="30"><path d="M4 22Q6 20 6 14Q6 6 13 6Q20 6 20 14Q20 20 23 22Z" stroke="#fff" stroke-width="2" fill="none" stroke-linejoin="round"/><path d="M10 25Q13 28 16 25" stroke="#fff" stroke-width="2" fill="none"/><circle cx="21" cy="6" r="5" fill="#fff"/></svg>

</div>
</body></html>
